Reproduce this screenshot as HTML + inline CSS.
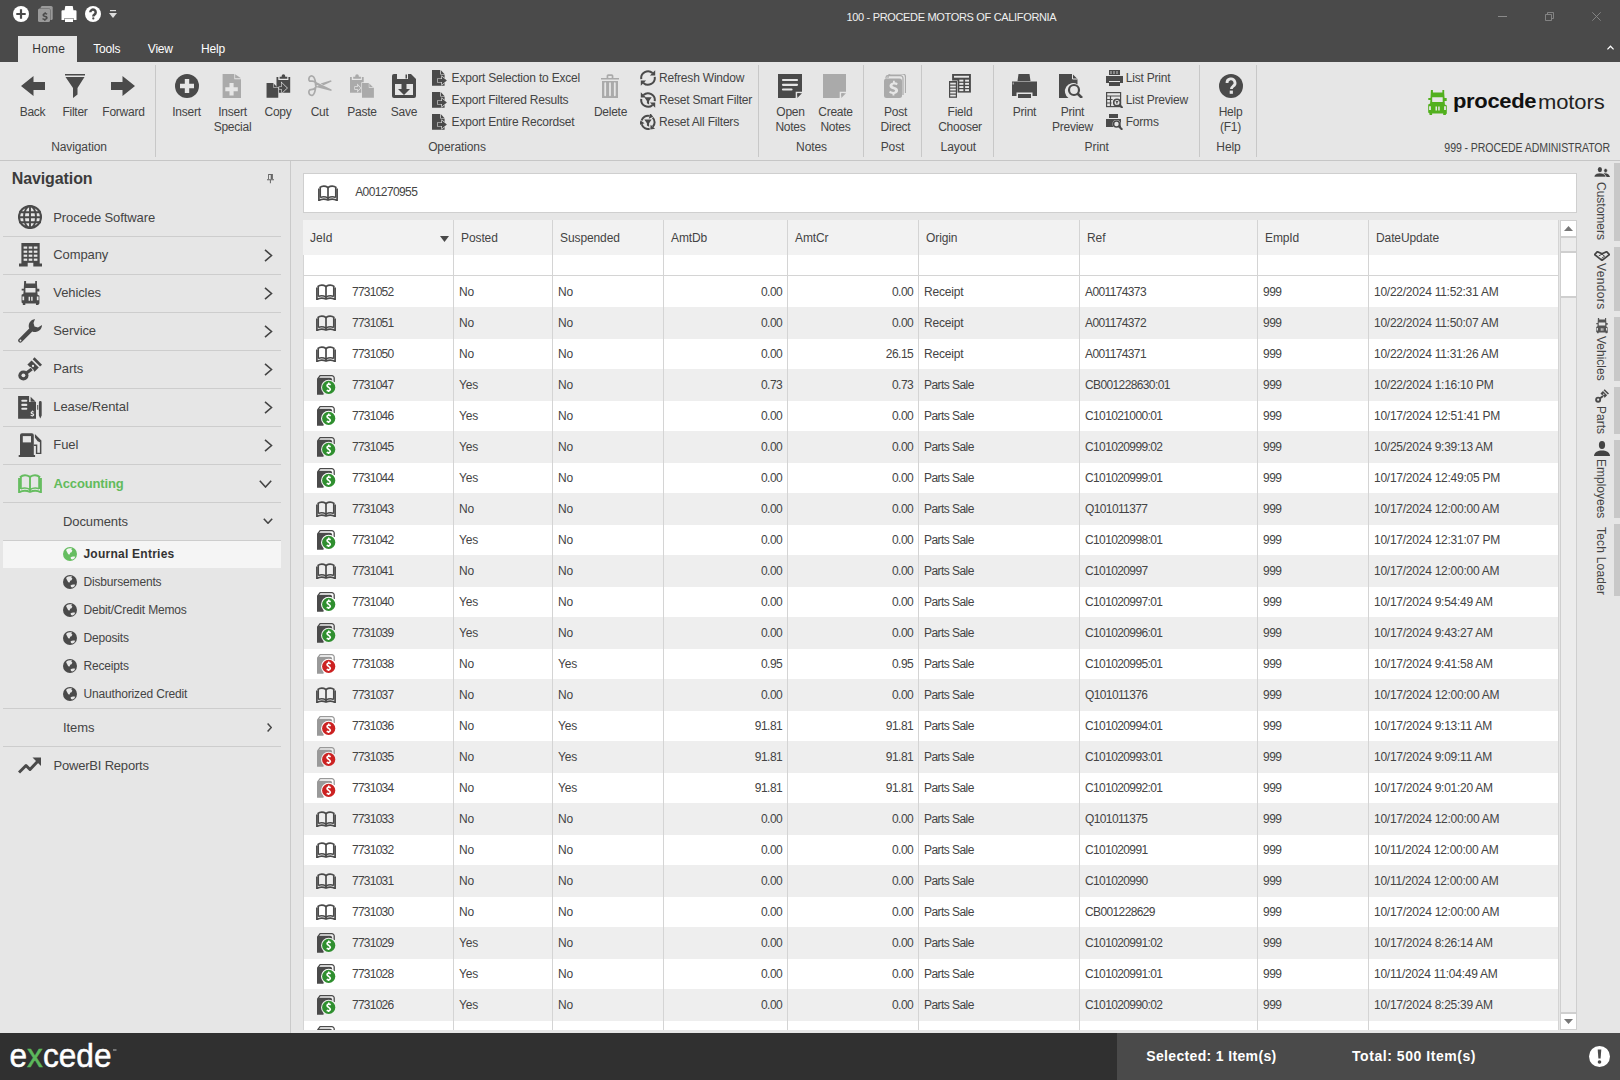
<!DOCTYPE html><html><head><meta charset="utf-8"><style>
html,body{margin:0;padding:0;}
body{width:1620px;height:1080px;overflow:hidden;position:relative;background:#e6e6e6;font-family:"Liberation Sans",sans-serif;}
.t{position:absolute;white-space:nowrap;}
.r{position:absolute;}
.i{position:absolute;overflow:visible;}
</style></head><body>
<svg width="0" height="0" style="position:absolute">
<defs>
<!-- quick access (white) -->
<symbol id="qa-plus" viewBox="0 0 16 16"><circle cx="8" cy="8" r="8" fill="#fff"/><path d="M6.9 3.3h2.2v3.6h3.6v2.2H9.1v3.6H6.9V9.1H3.3V6.9h3.6z" fill="#4a4a4a"/></symbol>
<symbol id="qa-dollar" viewBox="0 0 15 16"><rect x="2.7" y="0" width="12" height="14" rx="1.5" fill="#9a9a9a"/><rect x="0" y="2.6" width="12" height="13.4" rx="1.5" fill="#9a9a9a" stroke="#4a4a4a" stroke-width="0.8" paint-order="stroke"/><g transform="translate(1.2 3.2) scale(0.6)"><path d="M9 4.8v1.6c-2.2.3-3.5 1.6-3.5 3.4 0 2 1.5 2.8 3.6 3.4 1.5.4 2 .8 2 1.5s-.7 1.2-1.9 1.2c-1.2 0-2.3-.4-3.2-1.1l-.9 2c.9.7 2.2 1.1 3.4 1.2V19.6h1.9v-1.7c2.3-.3 3.7-1.7 3.7-3.5 0-2-1.3-2.9-3.6-3.5-1.6-.4-2-.8-2-1.4 0-.6.6-1.1 1.7-1.1 1 0 1.9.3 2.7.8l.8-2c-.8-.5-1.8-.8-2.9-.9V4.8z" fill="#4a4a4a"/></g></symbol>
<symbol id="qa-print" viewBox="0 0 16 16"><path d="M4.3 0h7.4l.8 4.6H3.5z M0.5 5.2a1 1 0 0 1 1-1h13a1 1 0 0 1 1 1V14h-3v-2h-9v2h-3z M4 12.6h8V16H4z" fill="#fff"/></symbol>
<symbol id="qa-help" viewBox="0 0 16 16"><circle cx="8" cy="8" r="8" fill="#fff"/><path d="M5.3 6.3a2.7 2.7 0 1 1 4.1 2.3c-.8.5-1.1.9-1.1 1.8" fill="none" stroke="#4a4a4a" stroke-width="2.5"/><rect x="7.2" y="11.3" width="2.2" height="2.2" rx="1" fill="#4a4a4a"/></symbol>
<symbol id="qa-drop" viewBox="0 0 8 9"><rect x="1" y="0" width="6" height="1.2" fill="#ddd"/><path d="M0 3h8L4 8z" fill="#ddd"/></symbol>
<symbol id="win-restore" viewBox="0 0 9 9"><path d="M0.5 2.5h6v6h-6z M2.5 2.5v-2h6v6h-2" fill="none" stroke="#8a8a8a" stroke-width="0.9"/></symbol>
<symbol id="win-close" viewBox="0 0 9 9"><path d="M0.3 0.3l8.4 8.4M8.7 0.3l-8.4 8.4" stroke="#8a8a8a" stroke-width="0.9"/></symbol>
<symbol id="caret-up" viewBox="0 0 7 5"><path d="M0.4 4.4L3.5 1.2 6.6 4.4" fill="none" stroke="#fff" stroke-width="1.3"/></symbol>
<!-- ribbon -->
<symbol id="back" viewBox="0 0 24 20"><path d="M0 10L12.5 0v6H24v8H12.5v6z" fill="#4a4a4a"/></symbol>
<symbol id="forward" viewBox="0 0 24 20"><path d="M24 10L11.5 0v6H0v8h11.5v6z" fill="#4a4a4a"/></symbol>
<symbol id="filter" viewBox="0 0 20 24"><rect x="0" y="0" width="20" height="1.5" fill="#4a4a4a"/><path d="M0.5 3h19l-7 11v6.5L8 24V14z" fill="#4a4a4a"/></symbol>
<symbol id="insert" viewBox="0 0 24 24"><circle cx="12" cy="12" r="12" fill="#4a4a4a"/><path d="M9.8 5h4.4v4.8H19v4.4h-4.8V19H9.8v-4.8H5V9.8h4.8z" fill="#e6e6e6"/></symbol>
<symbol id="insert-special" viewBox="0 0 20 24"><path d="M0.6 0H12.3V5.2H19V24H0.6z" fill="#aaaaaa"/><path d="M13.1 0.2V4.3H19z" fill="#aaaaaa"/><path d="M7.5 9h4.1v4.2h4.2v4.1h-4.2v4.2H7.5v-4.2H3.3v-4.1h4.2z" fill="#e6e6e6"/></symbol>
<symbol id="copy" viewBox="0 0 25 24"><path d="M10.5 3h1.8v3h10.1V3h1.8v15.8H10.5z" fill="#4a4a4a"/><path d="M13.6 2.8h2.05V2a1.78 1.78 0 0 1 3.56 0v0.8h2.1v1.9h-7.7z" fill="#4a4a4a"/><path d="M0.55 9h6.85v4.8h4.85v9.9H0.55z" fill="#4a4a4a" stroke="#e6e6e6" stroke-width="1.3" paint-order="stroke"/><path d="M7.9 9.8v3.4h3.4z" fill="#4a4a4a"/><path d="M13.2 13h2.4V8.8l5.4 5.2-5.4 5.2v-4.2h-2.4z" fill="#4a4a4a" stroke="#e6e6e6" stroke-width="1.2" paint-order="stroke"/></symbol>
<symbol id="cut" viewBox="0 0 24 22"><g fill="none" stroke="#aaaaaa" stroke-width="1.7" stroke-linejoin="round"><path d="M7.6 7.6C6.5 6.2 5 5.8 3 6.2 1.3 6.4 0.6 5 1 3.2 1.4 1.2 3.2 0.6 4.6 1.2 6.3 1.9 7 4.2 7.6 7.6z"/><path d="M7.6 12.6C6.5 14 5 14.6 3 14.6 1.3 14.6 0.6 16 1 18 1.4 20 3.2 20.8 4.6 20.2 6.3 19.5 7 17.2 7.6 12.6z"/></g><path d="M7 6.6L23.6 14.6 23.4 16 9.8 12.6 7.8 12.4 7 11.6 6.6 8.4z" fill="#aaaaaa"/><path d="M8.6 9.9a1 1 0 1 0 2 0.6" fill="#e6e6e6"/><path d="M12.6 8.4L23 5.2 23.6 6.4 15.6 10.3z" fill="#aaaaaa"/></symbol>
<symbol id="paste" viewBox="0 0 25 24"><path d="M1 3h1.8v3h10.1V3h1.8v15.8H1z" fill="#aaaaaa"/><path d="M4.2 2.8h2.05V2a1.78 1.78 0 0 1 3.56 0v0.8h2.1v1.9H4.2z" fill="#aaaaaa"/><path d="M13 9h6.8v4.8h5.1v9.9H13z" fill="#aaaaaa" stroke="#e6e6e6" stroke-width="1.3" paint-order="stroke"/><path d="M20.3 9.6v3.5h3.5z" fill="#aaaaaa"/><path d="M6 13h2.8V11.2l2.6 2.8-2.6 2.8v-1.8H6z" fill="#aaaaaa" stroke="#e6e6e6" stroke-width="1.3" paint-order="stroke"/></symbol>
<symbol id="save" viewBox="0 0 24 24"><path d="M0 2a2 2 0 0 1 2-2h17l5 5v17a2 2 0 0 1-2 2H2a2 2 0 0 1-2-2z" fill="#4a4a4a"/><path d="M5 0h11v5H5z" fill="#e6e6e6"/><path d="M13.5 0.5h1.5v4h-1.5z" fill="#4a4a4a"/><path d="M3 10h18v11H3z" fill="#e6e6e6"/><path d="M9.5 10h5v5h3.5l-6 6-6-6h3.5z" fill="#4a4a4a"/></symbol>
<symbol id="export" viewBox="0 0 16 16"><path d="M0 0h8.2v4.6h4.4V15.8H0z" fill="#4a4a4a"/><path d="M8.9 0.3v3.6h3.5z" fill="#4a4a4a"/><path d="M5.6 9.1h4.4V6.5l4.9 4-4.9 4v-2.6H5.6z" fill="#4a4a4a" stroke="#e6e6e6" stroke-width="1.2" paint-order="stroke"/></symbol>
<symbol id="delete" viewBox="0 0 18 24"><path d="M0 4h18v1.6H0z M1 7h16v17H1z" fill="#aaaaaa"/><path d="M5.6 4.2V1.8A1.6 1.6 0 0 1 7.2 0.2h3.6A1.6 1.6 0 0 1 12.4 1.8V4.2h-1.7V1.9H7.3V4.2z" fill="#aaaaaa"/><path d="M3.3 9.2a0.9 0.9 0 0 1 1.8 0V21.3a0.9 0.9 0 0 1-1.8 0z M8.1 9.2a0.9 0.9 0 0 1 1.8 0V21.3a0.9 0.9 0 0 1-1.8 0z M12.9 9.2a0.9 0.9 0 0 1 1.8 0V21.3a0.9 0.9 0 0 1-1.8 0z" fill="#e6e6e6"/></symbol>
<symbol id="refresh" viewBox="0 0 16 16"><path d="M1.3 9.2A6.8 6.8 0 0 1 12.6 3.1 M14.7 6.8A6.8 6.8 0 0 1 3.4 12.9" fill="none" stroke="#4a4a4a" stroke-width="2"/><path d="M15.2 0.3V5.6H9.9z M0.8 15.7V10.4H6.1z" fill="#4a4a4a"/></symbol>
<symbol id="reset-smart" viewBox="0 0 16 16"><g transform="translate(16 0) scale(-1 1)"><path d="M1.3 9.2A6.8 6.8 0 0 1 12.6 3.1 M14.7 6.8A6.8 6.8 0 0 1 3.4 12.9" fill="none" stroke="#4a4a4a" stroke-width="2"/><path d="M15.2 0.3V5.6H9.9z M0.8 15.7V10.4H6.1z" fill="#4a4a4a"/></g><path d="M4.3 5.3h7.4L9.1 9v3.4L6.9 11.2V9z" fill="#4a4a4a"/></symbol>
<symbol id="reset-all" viewBox="0 0 16 16"><path d="M1.62 6.59A6.6 6.6 0 0 1 9.48 1.87 M12.67 3.63A6.6 6.6 0 0 1 12.83 12.80 M9.71 14.68A6.6 6.6 0 0 1 1.69 10.23 " fill="none" stroke="#4a4a4a" stroke-width="2"/><path d="M13.19 2.72L10.16 -1.05L8.81 4.79z M10.24 15.58L15.02 14.85L10.63 10.76z M0.58 6.60L-1.18 11.11L4.56 9.35z " fill="#4a4a4a"/><path d="M4.3 5.6h7.4L9.1 9.3v3.4L6.9 11.5V9.3z" fill="#4a4a4a"/></symbol>
<symbol id="open-notes" viewBox="0 0 24 24"><path d="M0 0h24v17.5L17.5 24H0z" fill="#4a4a4a"/><path d="M5 6h14 M5 10.8h14 M5 15.5h8.5" stroke="#e6e6e6" stroke-width="2.2" stroke-linecap="round"/><path d="M24 18.5h-5.5V24" fill="none" stroke="#e6e6e6" stroke-width="1.6"/><path d="M19.3 19.3H24L19.3 24z" fill="#4a4a4a"/></symbol>
<symbol id="create-notes" viewBox="0 0 24 24"><path d="M0 0h23v17.5L16.5 24H0z" fill="#aaaaaa"/><path d="M23 18.5h-5.5V24" fill="none" stroke="#e6e6e6" stroke-width="1.6"/><path d="M18.3 19.3H23L18.3 24z" fill="#aaaaaa"/></symbol>
<symbol id="post-direct" viewBox="0 0 22 24"><path d="M4 4V2.8A2.8 2.8 0 0 1 6.8 0h11.7a3 3 0 0 1 3 3v16" fill="none" stroke="#aaaaaa" stroke-width="1.2"/><path d="M2 4.5V3.2A1.8 1.8 0 0 1 3.8 1.6h12.6a2.6 2.6 0 0 1 2.6 2.6V21" fill="none" stroke="#aaaaaa" stroke-width="1.2"/><rect x="0" y="4.5" width="18" height="19.5" rx="2.5" fill="#aaaaaa"/><g transform="translate(0 2)"><path d="M9 4.8v1.6c-2.2.3-3.5 1.6-3.5 3.4 0 2 1.5 2.8 3.6 3.4 1.5.4 2 .8 2 1.5s-.7 1.2-1.9 1.2c-1.2 0-2.3-.4-3.2-1.1l-.9 2c.9.7 2.2 1.1 3.4 1.2V19.6h1.9v-1.7c2.3-.3 3.7-1.7 3.7-3.5 0-2-1.3-2.9-3.6-3.5-1.6-.4-2-.8-2-1.4 0-.6.6-1.1 1.7-1.1 1 0 1.9.3 2.7.8l.8-2c-.8-.5-1.8-.8-2.9-.9V4.8z" fill="#e6e6e6"/></g></symbol>
<symbol id="field-chooser" viewBox="0 0 23 24"><path d="M3.1 0h18.8v18.6H3.1z" fill="#4a4a4a"/><path d="M5 1.8h15v1.9H5z" fill="#e6e6e6"/><rect x="10.3" y="5.7" width="4.1" height="1.9" fill="#e6e6e6"/><rect x="16.1" y="5.7" width="3.9" height="1.9" fill="#e6e6e6"/><rect x="10.3" y="8.9" width="4.1" height="1.9" fill="#e6e6e6"/><rect x="16.1" y="8.9" width="3.9" height="1.9" fill="#e6e6e6"/><rect x="10.3" y="12.1" width="4.1" height="1.9" fill="#e6e6e6"/><rect x="16.1" y="12.1" width="3.9" height="1.9" fill="#e6e6e6"/><rect x="10.3" y="15.2" width="4.1" height="1.9" fill="#e6e6e6"/><rect x="16.1" y="15.2" width="3.9" height="1.9" fill="#e6e6e6"/><path d="M0 7h8v16.8H0z" fill="#4a4a4a" stroke="#e6e6e6" stroke-width="1.2" paint-order="stroke"/><rect x="1.2" y="8.7" width="5.6" height="1.8" fill="#e6e6e6"/><rect x="1.2" y="11.7" width="5.6" height="1.8" fill="#e6e6e6"/><rect x="1.2" y="14.7" width="5.6" height="1.8" fill="#e6e6e6"/><rect x="1.2" y="17.7" width="5.6" height="1.8" fill="#e6e6e6"/><rect x="1.2" y="20.7" width="5.6" height="1.8" fill="#e6e6e6"/></symbol>
<symbol id="print" viewBox="0 0 25 24"><path d="M6.5 0h11l1 7h-13z M0 7.5h25v14.5h-4.5v-3.5h-16V22H0z M6 20h13v4H6z" fill="#4a4a4a"/><path d="M1.2 8.5v2" stroke="#e6e6e6" stroke-width="0.8"/></symbol>
<symbol id="print-preview" viewBox="0 0 25 24"><path d="M0 0h13.5l5 5v5.5a7 7 0 0 0-9 13.5H0z" fill="#4a4a4a"/><path d="M13.5 0v5h5" fill="none" stroke="#e6e6e6" stroke-width="1"/><circle cx="15" cy="16" r="5" fill="none" stroke="#4a4a4a" stroke-width="2.2"/><path d="M18.5 19.5l4.5 4.5" stroke="#4a4a4a" stroke-width="2.6"/></symbol>
<symbol id="list-print" viewBox="0 0 17 16"><path d="M3 0h11v5H3z M0 6h17v7h-3v-2H3v2H0z M3 12h11v4H3z" fill="#4a4a4a"/><path d="M5 1v3 M8 1v3 M11 1v3" stroke="#e6e6e6" stroke-width="0.8"/></symbol>
<symbol id="list-preview" viewBox="0 0 17 16"><g fill="none" stroke="#4a4a4a" stroke-width="1.2"><rect x="0.6" y="0.6" width="14" height="14"/><path d="M0.6 4h14 M0.6 7.5h6 M0.6 11h5 M4.5 4v10"/><circle cx="11" cy="10.5" r="3.3" stroke-width="1.6"/><path d="M13.5 13l3 3" stroke-width="2"/></g><path d="M9.5 9h3l-1.2 2v1.5L10.5 12v-1z" fill="#4a4a4a"/></symbol>
<symbol id="forms" viewBox="0 0 17 16"><path d="M3 0h9v4H3z M0 5h15v8H0z" fill="#4a4a4a"/><circle cx="10.5" cy="10" r="4" fill="#e6e6e6"/><circle cx="10.5" cy="10" r="3" fill="none" stroke="#4a4a4a" stroke-width="1.6"/><path d="M12.8 12.3l3.5 3.5" stroke="#4a4a4a" stroke-width="2"/></symbol>
<symbol id="help" viewBox="0 0 24 24"><circle cx="12" cy="12" r="12" fill="#4a4a4a"/><path d="M8 9a4 4 0 1 1 6 3.3c-1.2.8-1.6 1.3-1.6 2.7" fill="none" stroke="#e6e6e6" stroke-width="2.8"/><rect x="10.7" y="16.6" width="3.2" height="3.2" fill="#e6e6e6"/></symbol>
<symbol id="logo-truck" viewBox="0 0 19 25"><path d="M2.9 0h2v2.6h9.5V0h1.8v3l0.4 5h2.1v3h-2.1l0.3 3.4 1.9 1v8l-1 1V25h-2.6v-1.6H4.1V25H1.5v-1.6l-1.3-1v-8l1.9-1 0.3-3.4H0.3V8h2.2z" fill="#52b01e"/><path d="M4.2 7.3h10.5V12H4.2z M1.1 16.2h1.8v3.8H1.1z M16.1 16.2h1.8v3.8h-1.8z M7.5 16.5H9v4H7.5z M10.2 16.5h1.5v4h-1.5z" fill="#e6e6e6"/></symbol>
<!-- nav -->
<symbol id="pin" viewBox="0 0 8 10"><path d="M2.1 0h4.8v5.3H2.1z M3 1v4.2h1.7V1z" fill="#666" fill-rule="evenodd"/><path d="M1 5.2h7v1.1H1z M3.9 6.2h1v3H3.9z" fill="#666"/></symbol>
<symbol id="globe" viewBox="0 0 24 24"><circle cx="12" cy="12" r="12" fill="#4a4a4a"/><circle cx="12" cy="12" r="10" fill="#e6e6e6"/><g stroke="#4a4a4a" stroke-width="1.9" fill="none"><path d="M1 7.2h22 M0 12.2h24 M1 17.2h22 M12 1v22"/><ellipse cx="12" cy="12" rx="6" ry="11"/></g></symbol>
<symbol id="company" viewBox="0 0 23 24"><path d="M2.4 0h18.3v20.5H23V23.5H0V20.5h2.4z" fill="#4a4a4a"/><g fill="#e6e6e6"><rect x="4.6" y="3.5" width="3.6" height="2.2"/><rect x="9.7" y="3.5" width="3.6" height="2.2"/><rect x="14.8" y="3.5" width="3.6" height="2.2"/><rect x="4.6" y="7.6" width="3.6" height="2.2"/><rect x="9.7" y="7.6" width="3.6" height="2.2"/><rect x="14.8" y="7.6" width="3.6" height="2.2"/><rect x="4.6" y="11.6" width="3.6" height="2.2"/><rect x="9.7" y="11.6" width="3.6" height="2.2"/><rect x="14.8" y="11.6" width="3.6" height="2.2"/><rect x="4.6" y="15.6" width="3.6" height="2.2"/><rect x="9.7" y="15.6" width="3.6" height="2.2"/><rect x="14.8" y="15.6" width="3.6" height="2.2"/><rect x="8.7" y="19.8" width="5.6" height="4.2"/></g></symbol>
<symbol id="vehicles" viewBox="0 0 19 25"><path d="M2.9 0h2v2.6h9.5V0h1.8v3l0.4 5h2.1v3h-2.1l0.3 3.4 1.9 1v8l-1 1V25h-2.6v-1.6H4.1V25H1.5v-1.6l-1.3-1v-8l1.9-1 0.3-3.4H0.3V8h2.2z" fill="#4a4a4a"/><path d="M4.2 7.3h10.5V12H4.2z M1.1 16.2h1.8v3.8H1.1z M16.1 16.2h1.8v3.8h-1.8z M7.5 16.5H9v4H7.5z M10.2 16.5h1.5v4h-1.5z" fill="#e6e6e6"/></symbol>
<symbol id="service" viewBox="0 0 24 24"><path d="M17 0a7 7 0 0 0-5.8 9.5L0.8 20a2 2 0 0 0 3 3L14.3 12.5A7 7 0 0 0 24 6l-4 2.5-3.5-1-1-3.5z" fill="#4a4a4a"/><circle cx="2.5" cy="21.5" r="0.9" fill="#e6e6e6"/></symbol>
<symbol id="parts" viewBox="0 0 24 24"><path d="M16.6 0.3L24 7.7 22.1 9.6 14.7 2.2z" fill="#4a4a4a"/><path d="M13.6 3.4L20.8 10.6 16.6 14.8 9.4 7.6z" fill="#4a4a4a"/><circle cx="15" cy="9" r="1.15" fill="#e6e6e6"/><path d="M14.2 11.6L12.2 13.6" stroke="#e6e6e6" stroke-width="5"/><path d="M13.8 12L6.5 17.5" stroke="#4a4a4a" stroke-width="3.2"/><circle cx="5.4" cy="18.5" r="5.1" fill="#4a4a4a"/><circle cx="5.4" cy="18.3" r="1.9" fill="#e6e6e6"/></symbol>
<symbol id="lease" viewBox="0 0 24 24"><path d="M0.1 1.1H11.1V7.1H18V23.8H0.1z" fill="#4a4a4a"/><path d="M12.6 1.7V6.7H17.7z" fill="#4a4a4a"/><path d="M4.3 5.8h4 M4.3 9.9h4 M4.3 13.7h4" stroke="#e6e6e6" stroke-width="2.1" stroke-linecap="round"/><g transform="translate(10.3 13.6) scale(0.42)"><path d="M9 4.8v1.6c-2.2.3-3.5 1.6-3.5 3.4 0 2 1.5 2.8 3.6 3.4 1.5.4 2 .8 2 1.5s-.7 1.2-1.9 1.2c-1.2 0-2.3-.4-3.2-1.1l-.9 2c.9.7 2.2 1.1 3.4 1.2V19.6h1.9v-1.7c2.3-.3 3.7-1.7 3.7-3.5 0-2-1.3-2.9-3.6-3.5-1.6-.4-2-.8-2-1.4 0-.6.6-1.1 1.7-1.1 1 0 1.9.3 2.7.8l.8-2c-.8-.5-1.8-.8-2.9-.9V4.8z" fill="#e6e6e6"/></g><path d="M20.9 7.4a1.4 1.4 0 0 1 2.8 0V20.4L22.3 23.5 20.9 20.4z" fill="#4a4a4a"/><path d="M19.2 9.9h1v4.8h-1z" fill="#4a4a4a"/></symbol>
<symbol id="fuel" viewBox="0 0 24 24"><path d="M2 2.3a2 2 0 0 1 2-2h9.8a2 2 0 0 1 2 2V22h1.3v1.9H0.7V22H2z" fill="#4a4a4a"/><path d="M4.8 3.1h8.2v6.3H4.8z" fill="#e6e6e6"/><path d="M16.9 0.9L23.4 7.4V21.1H17.9V12.9H15.8V11.4H19.3V19.8H21.9V9.2L19.6 8.2 16.9 4.6z" fill="#4a4a4a"/></symbol>
<symbol id="accounting" viewBox="0 0 20 16" preserveAspectRatio="none"><g fill="none" stroke="#66bd60" stroke-width="1.6"><path d="M1.6 2.7C4 0.8 7.3 0.8 10 2.4 12.7 0.8 16 0.8 18.4 2.7"/><path d="M2.4 2.3V12.6 M17.6 2.3V12.6" stroke-width="1.5"/><path d="M10 2.4V14.6"/><path d="M2.4 12.5C5 11.4 7.5 11.6 10 13.1 12.5 11.6 15 11.4 17.6 12.5" stroke-width="1.4"/><path d="M0.9 3.4V15.5C3.8 13.7 7 13.7 10 15.1 13 13.7 16.2 13.7 19.1 15.5V3.4"/></g></symbol>
<symbol id="chev-right" viewBox="0 0 9 13"><path d="M1 0.8L7.5 6.5 1 12.2" fill="none" stroke="#444" stroke-width="1.6"/></symbol>
<symbol id="chev-down" viewBox="0 0 13 8"><path d="M0.8 0.8L6.5 7 12.2 0.8" fill="none" stroke="#444" stroke-width="1.6"/></symbol>
<symbol id="chev-down-s" viewBox="0 0 10 6"><path d="M0.8 0.8L5 5.2 9.2 0.8" fill="none" stroke="#444" stroke-width="1.6"/></symbol>
<symbol id="chev-right-s" viewBox="0 0 5 9"><path d="M0.6 0.6L4.3 4.5 0.6 8.4" fill="none" stroke="#444" stroke-width="1.5"/></symbol>
<symbol id="globe-green" viewBox="0 0 14 14"><circle cx="7" cy="7" r="7" fill="#66bd60"/><path d="M3.6 2.2C5 1.2 7.5 0.9 9 1.6L8.3 2.8 9.4 3.6 8.5 5.3 7.2 5.8 6.6 7.6 5.2 7.3 4.3 5.6 3.2 3.6z M7.6 10.2C9 9.3 10.8 9.2 12.2 9.8L11.3 11.6 9.4 12.6 8 12z" fill="#f5f5f5"/></symbol>
<symbol id="globe-dark" viewBox="0 0 14 14"><circle cx="7" cy="7" r="7" fill="#4a4a4a"/><path d="M3.6 2.2C5 1.2 7.5 0.9 9 1.6L8.3 2.8 9.4 3.6 8.5 5.3 7.2 5.8 6.6 7.6 5.2 7.3 4.3 5.6 3.2 3.6z M7.6 10.2C9 9.3 10.8 9.2 12.2 9.8L11.3 11.6 9.4 12.6 8 12z" fill="#e6e6e6"/></symbol>
<symbol id="powerbi" viewBox="0 0 23 17"><path d="M1 15.5L8 8.5l4 4 8.5-9" fill="none" stroke="#4a4a4a" stroke-width="3" stroke-linejoin="round"/><path d="M14.5 0.5H23v8.5z" fill="#4a4a4a"/></symbol>
<!-- grid -->
<symbol id="book" viewBox="0 0 20 16"><g fill="none" stroke="#4a4a4a" stroke-width="1.7"><path d="M1.6 2.7C4 0.8 7.3 0.8 10 2.4 12.7 0.8 16 0.8 18.4 2.7"/><path d="M2.3 2.3V12.6 M17.7 2.3V12.6" stroke-width="1.5"/><path d="M10 2.4V14.6"/><path d="M2.3 12.5C5 11.4 7.5 11.6 10 13.1 12.5 11.6 15 11.4 17.7 12.5" stroke-width="1.4"/><path d="M0.9 3.4V15.5C3.8 13.7 7 13.7 10 15.1 13 13.7 16.2 13.7 19.1 15.5V3.4"/></g></symbol>
<symbol id="doc-green" viewBox="0 0 19 20"><path d="M0.65 3.8L3.1 0.65H14.8A2.4 2.4 0 0 1 17.2 3.05V7" fill="none" stroke="#4a4a4a" stroke-width="1.3"/><path d="M0 4L1.2 2.7H12.8Q14.4 2.7 15 4L15.3 6.5H8L6.5 19.8H0z" fill="#4a4a4a"/><circle cx="11.7" cy="12.4" r="7.7" fill="var(--rowbg,#fff)"/><circle cx="11.7" cy="12.4" r="6.6" fill="#2f8f2f"/><path d="M13.7 9.7Q11.8 8.5 10.5 9.6T11.7 12.4 12.9 15.2 9.7 15.2" fill="none" stroke="#fff" stroke-width="1.6"/><path d="M11.7 7.6v1.6 M11.7 15.3v1.6" stroke="#fff" stroke-width="1.4"/></symbol>
<symbol id="doc-red" viewBox="0 0 19 20"><path d="M0.65 3.8L3.1 0.65H14.8A2.4 2.4 0 0 1 17.2 3.05V7" fill="none" stroke="#999" stroke-width="1.3"/><path d="M0 4L1.2 2.7H12.8Q14.4 2.7 15 4L15.3 6.5H8L6.5 19.8H0z" fill="#999"/><circle cx="11.7" cy="12.4" r="7.7" fill="var(--rowbg,#fff)"/><circle cx="11.7" cy="12.4" r="6.6" fill="#cc2222"/><path d="M13.7 9.7Q11.8 8.5 10.5 9.6T11.7 12.4 12.9 15.2 9.7 15.2" fill="none" stroke="#fff" stroke-width="1.6"/><path d="M11.7 7.6v1.6 M11.7 15.3v1.6" stroke="#fff" stroke-width="1.4"/></symbol>
<symbol id="sort-down" viewBox="0 0 9 6"><path d="M0 0h9L4.5 6z" fill="#4a4a4a"/></symbol>
<symbol id="sb-up" viewBox="0 0 9 5"><path d="M0 5h9L4.5 0z" fill="#777"/></symbol>
<symbol id="sb-down" viewBox="0 0 9 5"><path d="M0 0h9L4.5 5z" fill="#777"/></symbol>
<!-- side tabs -->
<symbol id="s-customers" viewBox="0 0 16 10"><path d="M9.4 6.6C10.2 6.3 11 6.2 11.8 6.2 14 6.4 15.5 8 16 10H12.6z" fill="#444"/><ellipse cx="11.6" cy="3.6" rx="1.8" ry="2.2" fill="#444" stroke="#e6e6e6" stroke-width="0.6"/><ellipse cx="5.9" cy="2.6" rx="2.1" ry="2.6" fill="#444"/><path d="M0 10C0.4 7.2 2.8 6 5.9 6S11.4 7.2 12 10z" fill="#444" stroke="#e6e6e6" stroke-width="0.6"/></symbol>
<symbol id="s-vendors" viewBox="0 0 16 10"><path d="M0.6 3.6L3.4 0.7 8 2.8 12.6 0.7 15.4 3.6 8 9.4z" fill="none" stroke="#444" stroke-width="1.7" stroke-linejoin="round"/><path d="M4.8 4.8L8 3.2 10.6 5.2 7.6 7.4" fill="none" stroke="#444" stroke-width="1"/></symbol>
<symbol id="s-vehicles" viewBox="0 0 19 25"><path d="M2.9 0h2v2.6h9.5V0h1.8v3l0.4 5h2.1v3h-2.1l0.3 3.4 1.9 1v8l-1 1V25h-2.6v-1.6H4.1V25H1.5v-1.6l-1.3-1v-8l1.9-1 0.3-3.4H0.3V8h2.2z" fill="#555"/><path d="M4.2 7.3h10.5V12H4.2z M1.1 16.2h1.8v3.8H1.1z M16.1 16.2h1.8v3.8h-1.8z M7.5 16.5H9v4H7.5z M10.2 16.5h1.5v4h-1.5z" fill="#e6e6e6"/></symbol>
<symbol id="s-parts" viewBox="0 0 24 24"><use href="#parts"/></symbol>
<symbol id="s-employees" viewBox="0 0 16 15"><ellipse cx="8" cy="4" rx="3.1" ry="4" fill="#444"/><path d="M0 15C0.4 11.2 3.8 9.6 8 9.6S15.6 11.2 16 15z" fill="#444"/></symbol>
<!-- footer -->
<symbol id="excede" viewBox="0 0 112 30"><g transform="translate(1.5 0) scale(0.93 1)"><text x="0" y="27.4" font-family="Liberation Sans" font-size="34" fill="#fff" stroke="#fff" stroke-width="0.5" letter-spacing="0">e<tspan fill="#5cb85c" stroke="#5cb85c">x</tspan>cede</text></g><rect x="105" y="9.5" width="3.5" height="1" fill="#bbb"/></symbol>
<symbol id="alert" viewBox="0 0 21 21"><circle cx="10.5" cy="10.5" r="10.5" fill="#fff"/><path d="M8.7 3.5h3.6l-0.7 9h-2.2z" fill="#4a4a4a"/><circle cx="10.5" cy="16" r="1.8" fill="#4a4a4a"/></symbol>
</defs>
</svg>

<div class="r" style="left:0px;top:0px;width:1620px;height:62px;background:#4a4a4a;"></div>
<svg class="i" style="left:13px;top:6px;" width="16" height="16"><use href="#qa-plus"/></svg>
<svg class="i" style="left:38px;top:6px;" width="15" height="16"><use href="#qa-dollar"/></svg>
<svg class="i" style="left:61px;top:6px;" width="16" height="16"><use href="#qa-print"/></svg>
<svg class="i" style="left:85px;top:6px;" width="16" height="16"><use href="#qa-help"/></svg>
<svg class="i" style="left:109px;top:10px;" width="8" height="9"><use href="#qa-drop"/></svg>
<div class="t" style="left:846.5px;top:12.19px;font-size:11px;line-height:11px;color:#f0f0f0;letter-spacing:-0.33px;">100 - PROCEDE MOTORS OF CALIFORNIA</div>
<div class="r" style="left:1498px;top:16px;width:9px;height:1px;background:#8a8a8a;"></div>
<svg class="i" style="left:1545px;top:12px;" width="9" height="9"><use href="#win-restore"/></svg>
<svg class="i" style="left:1592px;top:12px;" width="9" height="9"><use href="#win-close"/></svg>
<svg class="i" style="left:1607px;top:45px;" width="7" height="5"><use href="#caret-up"/></svg>
<div class="r" style="left:18px;top:36px;width:59px;height:26px;background:#e6e6e6;"></div>
<div class="t" style="left:32.3px;top:42.64px;font-size:12px;line-height:12px;color:#333;letter-spacing:0.2px;">Home</div>
<div class="t" style="left:93.2px;top:42.64px;font-size:12px;line-height:12px;color:#fff;letter-spacing:-0.2px;">Tools</div>
<div class="t" style="left:147.8px;top:42.64px;font-size:12px;line-height:12px;color:#fff;letter-spacing:-0.2px;">View</div>
<div class="t" style="left:201.1px;top:42.64px;font-size:12px;line-height:12px;color:#fff;letter-spacing:-0.2px;">Help</div>
<div class="r" style="left:0px;top:160px;width:1620px;height:1px;background:#c6c6c6;"></div>
<div class="r" style="left:155px;top:65px;width:1px;height:92px;background:#c8c8c8;"></div>
<div class="r" style="left:758px;top:65px;width:1px;height:92px;background:#c8c8c8;"></div>
<div class="r" style="left:863px;top:65px;width:1px;height:92px;background:#c8c8c8;"></div>
<div class="r" style="left:921px;top:65px;width:1px;height:92px;background:#c8c8c8;"></div>
<div class="r" style="left:993px;top:65px;width:1px;height:92px;background:#c8c8c8;"></div>
<div class="r" style="left:1199px;top:65px;width:1px;height:92px;background:#c8c8c8;"></div>
<div class="r" style="left:1256px;top:65px;width:1px;height:92px;background:#c8c8c8;"></div>
<div class="t" style="left:-7.5px;width:80px;text-align:center;top:105.84px;font-size:12px;line-height:12px;color:#444;letter-spacing:-0.25px;">Back</div>
<div class="t" style="left:35.0px;width:80px;text-align:center;top:105.84px;font-size:12px;line-height:12px;color:#444;letter-spacing:-0.25px;">Filter</div>
<div class="t" style="left:83.5px;width:80px;text-align:center;top:105.84px;font-size:12px;line-height:12px;color:#444;letter-spacing:-0.25px;">Forward</div>
<div class="t" style="left:29.0px;width:100px;text-align:center;top:141.14px;font-size:12px;line-height:12px;color:#444;letter-spacing:-0.1px;">Navigation</div>
<svg class="i" style="left:21px;top:76px;" width="24" height="20"><use href="#back"/></svg>
<svg class="i" style="left:65px;top:74px;" width="20" height="24"><use href="#filter"/></svg>
<svg class="i" style="left:111px;top:76px;" width="24" height="20"><use href="#forward"/></svg>
<div class="t" style="left:146.5px;width:80px;text-align:center;top:105.84px;font-size:12px;line-height:12px;color:#444;letter-spacing:-0.25px;">Insert</div>
<div class="t" style="left:192.5px;width:80px;text-align:center;top:105.84px;font-size:12px;line-height:12px;color:#444;letter-spacing:-0.25px;">Insert</div>
<div class="t" style="left:192.5px;width:80px;text-align:center;top:120.84px;font-size:12px;line-height:12px;color:#444;letter-spacing:-0.25px;">Special</div>
<div class="t" style="left:238.0px;width:80px;text-align:center;top:105.84px;font-size:12px;line-height:12px;color:#444;letter-spacing:-0.25px;">Copy</div>
<div class="t" style="left:279.6px;width:80px;text-align:center;top:105.84px;font-size:12px;line-height:12px;color:#444;letter-spacing:-0.25px;">Cut</div>
<div class="t" style="left:322.0px;width:80px;text-align:center;top:105.84px;font-size:12px;line-height:12px;color:#444;letter-spacing:-0.25px;">Paste</div>
<div class="t" style="left:364.0px;width:80px;text-align:center;top:105.84px;font-size:12px;line-height:12px;color:#444;letter-spacing:-0.25px;">Save</div>
<svg class="i" style="left:175px;top:74px;" width="24" height="24"><use href="#insert"/></svg>
<svg class="i" style="left:222px;top:74px;" width="20" height="24"><use href="#insert-special"/></svg>
<svg class="i" style="left:266px;top:74px;" width="25" height="24"><use href="#copy"/></svg>
<svg class="i" style="left:308px;top:75px;" width="24" height="22"><use href="#cut"/></svg>
<svg class="i" style="left:349px;top:74px;" width="25" height="24"><use href="#paste"/></svg>
<svg class="i" style="left:392px;top:74px;" width="24" height="24"><use href="#save"/></svg>
<svg class="i" style="left:432px;top:70px;" width="16" height="16"><use href="#export"/></svg>
<div class="t" style="left:451.6px;top:71.84px;font-size:12px;line-height:12px;color:#444;letter-spacing:-0.2px;">Export Selection to Excel</div>
<svg class="i" style="left:432px;top:92px;" width="16" height="16"><use href="#export"/></svg>
<div class="t" style="left:451.6px;top:93.84px;font-size:12px;line-height:12px;color:#444;letter-spacing:-0.2px;">Export Filtered Results</div>
<svg class="i" style="left:432px;top:114px;" width="16" height="16"><use href="#export"/></svg>
<div class="t" style="left:451.6px;top:115.84px;font-size:12px;line-height:12px;color:#444;letter-spacing:-0.2px;">Export Entire Recordset</div>
<svg class="i" style="left:601px;top:74px;" width="18" height="24"><use href="#delete"/></svg>
<div class="t" style="left:570.5px;width:80px;text-align:center;top:105.84px;font-size:12px;line-height:12px;color:#444;letter-spacing:-0.25px;">Delete</div>
<svg class="i" style="left:640px;top:70px;" width="16" height="16"><use href="#refresh"/></svg>
<div class="t" style="left:659px;top:71.84px;font-size:12px;line-height:12px;color:#444;letter-spacing:-0.2px;">Refresh Window</div>
<svg class="i" style="left:640px;top:92px;" width="16" height="16"><use href="#reset-smart"/></svg>
<div class="t" style="left:659px;top:93.84px;font-size:12px;line-height:12px;color:#444;letter-spacing:-0.2px;">Reset Smart Filter</div>
<svg class="i" style="left:640px;top:114px;" width="16" height="16"><use href="#reset-all"/></svg>
<div class="t" style="left:659px;top:115.84px;font-size:12px;line-height:12px;color:#444;letter-spacing:-0.2px;">Reset All Filters</div>
<div class="t" style="left:407.0px;width:100px;text-align:center;top:141.14px;font-size:12px;line-height:12px;color:#444;letter-spacing:-0.1px;">Operations</div>
<svg class="i" style="left:778px;top:74px;" width="24" height="24"><use href="#open-notes"/></svg>
<svg class="i" style="left:823px;top:74px;" width="24" height="24"><use href="#create-notes"/></svg>
<div class="t" style="left:750.5px;width:80px;text-align:center;top:105.84px;font-size:12px;line-height:12px;color:#444;letter-spacing:-0.25px;">Open</div>
<div class="t" style="left:750.5px;width:80px;text-align:center;top:120.84px;font-size:12px;line-height:12px;color:#444;letter-spacing:-0.25px;">Notes</div>
<div class="t" style="left:795.5px;width:80px;text-align:center;top:105.84px;font-size:12px;line-height:12px;color:#444;letter-spacing:-0.25px;">Create</div>
<div class="t" style="left:795.5px;width:80px;text-align:center;top:120.84px;font-size:12px;line-height:12px;color:#444;letter-spacing:-0.25px;">Notes</div>
<div class="t" style="left:781.5px;width:60px;text-align:center;top:141.14px;font-size:12px;line-height:12px;color:#444;letter-spacing:-0.1px;">Notes</div>
<svg class="i" style="left:884px;top:74px;" width="22" height="24"><use href="#post-direct"/></svg>
<div class="t" style="left:855.5px;width:80px;text-align:center;top:105.84px;font-size:12px;line-height:12px;color:#444;letter-spacing:-0.25px;">Post</div>
<div class="t" style="left:855.5px;width:80px;text-align:center;top:120.84px;font-size:12px;line-height:12px;color:#444;letter-spacing:-0.25px;">Direct</div>
<div class="t" style="left:862.5px;width:60px;text-align:center;top:141.14px;font-size:12px;line-height:12px;color:#444;letter-spacing:-0.1px;">Post</div>
<svg class="i" style="left:949px;top:74px;" width="23" height="24"><use href="#field-chooser"/></svg>
<div class="t" style="left:920.0px;width:80px;text-align:center;top:105.84px;font-size:12px;line-height:12px;color:#444;letter-spacing:-0.25px;">Field</div>
<div class="t" style="left:920.0px;width:80px;text-align:center;top:120.84px;font-size:12px;line-height:12px;color:#444;letter-spacing:-0.25px;">Chooser</div>
<div class="t" style="left:928.3px;width:60px;text-align:center;top:141.14px;font-size:12px;line-height:12px;color:#444;letter-spacing:-0.1px;">Layout</div>
<svg class="i" style="left:1012px;top:74px;" width="25" height="24"><use href="#print"/></svg>
<div class="t" style="left:984.5px;width:80px;text-align:center;top:105.84px;font-size:12px;line-height:12px;color:#444;letter-spacing:-0.25px;">Print</div>
<svg class="i" style="left:1059px;top:74px;" width="25" height="24"><use href="#print-preview"/></svg>
<div class="t" style="left:1032.5px;width:80px;text-align:center;top:105.84px;font-size:12px;line-height:12px;color:#444;letter-spacing:-0.25px;">Print</div>
<div class="t" style="left:1032.5px;width:80px;text-align:center;top:120.84px;font-size:12px;line-height:12px;color:#444;letter-spacing:-0.25px;">Preview</div>
<svg class="i" style="left:1106px;top:70px;" width="17" height="16"><use href="#list-print"/></svg>
<div class="t" style="left:1125.7px;top:71.84px;font-size:12px;line-height:12px;color:#444;letter-spacing:-0.2px;">List Print</div>
<svg class="i" style="left:1106px;top:92px;" width="17" height="16"><use href="#list-preview"/></svg>
<div class="t" style="left:1125.7px;top:93.84px;font-size:12px;line-height:12px;color:#444;letter-spacing:-0.2px;">List Preview</div>
<svg class="i" style="left:1106px;top:114px;" width="17" height="16"><use href="#forms"/></svg>
<div class="t" style="left:1125.7px;top:115.84px;font-size:12px;line-height:12px;color:#444;letter-spacing:-0.2px;">Forms</div>
<div class="t" style="left:1066.7px;width:60px;text-align:center;top:141.14px;font-size:12px;line-height:12px;color:#444;letter-spacing:-0.1px;">Print</div>
<svg class="i" style="left:1219px;top:74px;" width="24" height="24"><use href="#help"/></svg>
<div class="t" style="left:1190.5px;width:80px;text-align:center;top:105.84px;font-size:12px;line-height:12px;color:#444;letter-spacing:-0.25px;">Help</div>
<div class="t" style="left:1190.5px;width:80px;text-align:center;top:120.84px;font-size:12px;line-height:12px;color:#444;letter-spacing:-0.25px;">(F1)</div>
<div class="t" style="left:1198.5px;width:60px;text-align:center;top:141.14px;font-size:12px;line-height:12px;color:#444;letter-spacing:-0.1px;">Help</div>
<svg class="i" style="left:1428px;top:90px;" width="19" height="25"><use href="#logo-truck"/></svg>
<div class="t" style="left:1453.3px;top:91.47px;font-size:20px;line-height:20px;color:#111;font-weight:700;letter-spacing:-0.3px;transform:scaleX(1.1);transform-origin:0 0;">procede</div>
<div class="t" style="left:1537.8px;top:91.97px;font-size:20px;line-height:20px;color:#222;letter-spacing:-0.1px;transform:scaleX(1.1);transform-origin:0 0;">motors</div>
<div class="t" style="left:1409.6px;width:200px;text-align:right;top:142.04px;font-size:12px;line-height:12px;color:#444;letter-spacing:-0.1px;transform:scaleX(0.88);transform-origin:100% 0;">999 - PROCEDE ADMINISTRATOR</div>
<div class="r" style="left:290px;top:161px;width:1px;height:872px;background:#cacaca;"></div>
<div class="t" style="left:11.7px;top:170.86px;font-size:16px;line-height:16px;color:#3c3c3c;font-weight:700;letter-spacing:-0.1px;">Navigation</div>
<svg class="i" style="left:266px;top:174px;" width="8" height="10"><use href="#pin"/></svg>
<svg class="i" style="left:18px;top:205px;" width="24" height="24"><use href="#globe"/></svg>
<div class="t" style="left:53.3px;top:211.00px;font-size:13px;line-height:13px;color:#444;letter-spacing:-0.1px;">Procede Software</div>
<div class="r" style="left:3px;top:236px;width:278px;height:1px;background:#cdcdcd;"></div>
<svg class="i" style="left:19px;top:243px;" width="23" height="24"><use href="#company"/></svg>
<div class="t" style="left:53.3px;top:248.40px;font-size:13px;line-height:13px;color:#444;letter-spacing:-0.1px;">Company</div>
<svg class="i" style="left:264px;top:249px;" width="9" height="13"><use href="#chev-right"/></svg>
<div class="r" style="left:3px;top:274px;width:278px;height:1px;background:#cdcdcd;"></div>
<svg class="i" style="left:20.7px;top:281px;" width="19" height="24"><use href="#vehicles"/></svg>
<div class="t" style="left:53.3px;top:286.40px;font-size:13px;line-height:13px;color:#444;letter-spacing:-0.1px;">Vehicles</div>
<svg class="i" style="left:264px;top:287px;" width="9" height="13"><use href="#chev-right"/></svg>
<div class="r" style="left:3px;top:312px;width:278px;height:1px;background:#cdcdcd;"></div>
<svg class="i" style="left:18px;top:319px;" width="24" height="24"><use href="#service"/></svg>
<div class="t" style="left:53.3px;top:324.40px;font-size:13px;line-height:13px;color:#444;letter-spacing:-0.1px;">Service</div>
<svg class="i" style="left:264px;top:325px;" width="9" height="13"><use href="#chev-right"/></svg>
<div class="r" style="left:3px;top:350px;width:278px;height:1px;background:#cdcdcd;"></div>
<svg class="i" style="left:18px;top:357px;" width="24" height="24"><use href="#parts"/></svg>
<div class="t" style="left:53.3px;top:362.40px;font-size:13px;line-height:13px;color:#444;letter-spacing:-0.1px;">Parts</div>
<svg class="i" style="left:264px;top:363px;" width="9" height="13"><use href="#chev-right"/></svg>
<div class="r" style="left:3px;top:388px;width:278px;height:1px;background:#cdcdcd;"></div>
<svg class="i" style="left:18px;top:395px;" width="24" height="24"><use href="#lease"/></svg>
<div class="t" style="left:53.3px;top:400.40px;font-size:13px;line-height:13px;color:#444;letter-spacing:-0.1px;">Lease/Rental</div>
<svg class="i" style="left:264px;top:401px;" width="9" height="13"><use href="#chev-right"/></svg>
<div class="r" style="left:3px;top:426px;width:278px;height:1px;background:#cdcdcd;"></div>
<svg class="i" style="left:18px;top:433px;" width="24" height="24"><use href="#fuel"/></svg>
<div class="t" style="left:53.3px;top:438.40px;font-size:13px;line-height:13px;color:#444;letter-spacing:-0.1px;">Fuel</div>
<svg class="i" style="left:264px;top:439px;" width="9" height="13"><use href="#chev-right"/></svg>
<div class="r" style="left:3px;top:464px;width:278px;height:1px;background:#cdcdcd;"></div>
<svg class="i" style="left:18px;top:473.5px;" width="24" height="19"><use href="#accounting"/></svg>
<div class="t" style="left:53.5px;top:477.30px;font-size:13px;line-height:13px;color:#62bb5c;font-weight:700;letter-spacing:-0.15px;">Accounting</div>
<svg class="i" style="left:259px;top:480px;" width="13" height="8"><use href="#chev-down"/></svg>
<div class="r" style="left:3px;top:502px;width:278px;height:1px;background:#cdcdcd;"></div>
<div class="t" style="left:63px;top:515.00px;font-size:13px;line-height:13px;color:#444;letter-spacing:-0.1px;">Documents</div>
<svg class="i" style="left:263px;top:518px;" width="10" height="6"><use href="#chev-down-s"/></svg>
<div class="r" style="left:3px;top:540px;width:278px;height:1px;background:#cdcdcd;"></div>
<div class="r" style="left:3px;top:541px;width:278px;height:27px;background:#f5f5f5;"></div>
<svg class="i" style="left:63px;top:547px;" width="14" height="14"><use href="#globe-green"/></svg>
<div class="t" style="left:83.4px;top:548.04px;font-size:12px;line-height:12px;color:#333;font-weight:700;letter-spacing:0.25px;">Journal Entries</div>
<svg class="i" style="left:63px;top:575px;" width="14" height="14"><use href="#globe-dark"/></svg>
<div class="t" style="left:83.4px;top:575.84px;font-size:12px;line-height:12px;color:#444;letter-spacing:-0.15px;">Disbursements</div>
<svg class="i" style="left:63px;top:603px;" width="14" height="14"><use href="#globe-dark"/></svg>
<div class="t" style="left:83.4px;top:603.84px;font-size:12px;line-height:12px;color:#444;letter-spacing:-0.15px;">Debit/Credit Memos</div>
<svg class="i" style="left:63px;top:631px;" width="14" height="14"><use href="#globe-dark"/></svg>
<div class="t" style="left:83.4px;top:631.84px;font-size:12px;line-height:12px;color:#444;letter-spacing:-0.15px;">Deposits</div>
<svg class="i" style="left:63px;top:659px;" width="14" height="14"><use href="#globe-dark"/></svg>
<div class="t" style="left:83.4px;top:659.84px;font-size:12px;line-height:12px;color:#444;letter-spacing:-0.15px;">Receipts</div>
<svg class="i" style="left:63px;top:687px;" width="14" height="14"><use href="#globe-dark"/></svg>
<div class="t" style="left:83.4px;top:687.84px;font-size:12px;line-height:12px;color:#444;letter-spacing:-0.15px;">Unauthorized Credit</div>
<div class="r" style="left:3px;top:708px;width:278px;height:1px;background:#cdcdcd;"></div>
<div class="t" style="left:63px;top:721.40px;font-size:13px;line-height:13px;color:#444;letter-spacing:-0.1px;">Items</div>
<svg class="i" style="left:267px;top:723px;" width="5" height="9"><use href="#chev-right-s"/></svg>
<div class="r" style="left:3px;top:746px;width:278px;height:1px;background:#cdcdcd;"></div>
<svg class="i" style="left:18px;top:757px;" width="23" height="17"><use href="#powerbi"/></svg>
<div class="t" style="left:53.5px;top:759.10px;font-size:13px;line-height:13px;color:#444;letter-spacing:-0.2px;">PowerBI Reports</div>
<div class="r" style="left:303px;top:173px;width:1274px;height:40px;background:#fff;border:1px solid #cfcfcf;box-sizing:border-box;"></div>
<svg class="i" style="left:318px;top:185px;" width="20" height="16"><use href="#book"/></svg>
<div class="t" style="left:355.2px;top:185.64px;font-size:12px;line-height:12px;color:#444;letter-spacing:-0.6px;">A001270955</div>
<div class="r" style="left:303px;top:220px;width:1256px;height:35px;background:#f2f2f2;"></div>
<div class="r" style="left:303px;top:255px;width:1256px;height:775px;background:#fff;"></div>
<div class="r" style="left:303px;top:276px;width:1256px;height:754px;overflow:hidden;">
<svg class="i" style="left:13px;top:8px" width="20" height="16"><use href="#book"/></svg>
<div class="t" style="left:49px;top:9.94px;font-size:12px;line-height:12px;color:#444;letter-spacing:-0.75px">7731052</div>
<div class="t" style="left:156px;top:9.94px;font-size:12px;line-height:12px;color:#444;letter-spacing:-0.2px">No</div>
<div class="t" style="left:255px;top:9.94px;font-size:12px;line-height:12px;color:#444;letter-spacing:-0.2px">No</div>
<div class="t" style="left:379.3px;width:100px;text-align:right;top:9.94px;font-size:12px;line-height:12px;color:#444;letter-spacing:-0.5px">0.00</div>
<div class="t" style="left:510.29999999999995px;width:100px;text-align:right;top:9.94px;font-size:12px;line-height:12px;color:#444;letter-spacing:-0.5px">0.00</div>
<div class="t" style="left:621px;top:9.94px;font-size:12px;line-height:12px;color:#444;letter-spacing:-0.2px">Receipt</div>
<div class="t" style="left:782px;top:9.94px;font-size:12px;line-height:12px;color:#444;letter-spacing:-0.62px">A001174373</div>
<div class="t" style="left:960px;top:9.94px;font-size:12px;line-height:12px;color:#444;letter-spacing:-0.5px">999</div>
<div class="t" style="left:1071px;top:9.94px;font-size:12px;line-height:12px;color:#444;letter-spacing:-0.25px">10/22/2024 11:52:31 AM</div>
<div class="r" style="left:0;top:31px;width:1256px;height:32px;background:#eeeeee"></div>
<svg class="i" style="left:13px;top:39px" width="20" height="16"><use href="#book"/></svg>
<div class="t" style="left:49px;top:40.94px;font-size:12px;line-height:12px;color:#444;letter-spacing:-0.75px">7731051</div>
<div class="t" style="left:156px;top:40.94px;font-size:12px;line-height:12px;color:#444;letter-spacing:-0.2px">No</div>
<div class="t" style="left:255px;top:40.94px;font-size:12px;line-height:12px;color:#444;letter-spacing:-0.2px">No</div>
<div class="t" style="left:379.3px;width:100px;text-align:right;top:40.94px;font-size:12px;line-height:12px;color:#444;letter-spacing:-0.5px">0.00</div>
<div class="t" style="left:510.29999999999995px;width:100px;text-align:right;top:40.94px;font-size:12px;line-height:12px;color:#444;letter-spacing:-0.5px">0.00</div>
<div class="t" style="left:621px;top:40.94px;font-size:12px;line-height:12px;color:#444;letter-spacing:-0.2px">Receipt</div>
<div class="t" style="left:782px;top:40.94px;font-size:12px;line-height:12px;color:#444;letter-spacing:-0.62px">A001174372</div>
<div class="t" style="left:960px;top:40.94px;font-size:12px;line-height:12px;color:#444;letter-spacing:-0.5px">999</div>
<div class="t" style="left:1071px;top:40.94px;font-size:12px;line-height:12px;color:#444;letter-spacing:-0.25px">10/22/2024 11:50:07 AM</div>
<svg class="i" style="left:13px;top:70px" width="20" height="16"><use href="#book"/></svg>
<div class="t" style="left:49px;top:71.94px;font-size:12px;line-height:12px;color:#444;letter-spacing:-0.75px">7731050</div>
<div class="t" style="left:156px;top:71.94px;font-size:12px;line-height:12px;color:#444;letter-spacing:-0.2px">No</div>
<div class="t" style="left:255px;top:71.94px;font-size:12px;line-height:12px;color:#444;letter-spacing:-0.2px">No</div>
<div class="t" style="left:379.3px;width:100px;text-align:right;top:71.94px;font-size:12px;line-height:12px;color:#444;letter-spacing:-0.5px">0.00</div>
<div class="t" style="left:510.29999999999995px;width:100px;text-align:right;top:71.94px;font-size:12px;line-height:12px;color:#444;letter-spacing:-0.5px">26.15</div>
<div class="t" style="left:621px;top:71.94px;font-size:12px;line-height:12px;color:#444;letter-spacing:-0.2px">Receipt</div>
<div class="t" style="left:782px;top:71.94px;font-size:12px;line-height:12px;color:#444;letter-spacing:-0.62px">A001174371</div>
<div class="t" style="left:960px;top:71.94px;font-size:12px;line-height:12px;color:#444;letter-spacing:-0.5px">999</div>
<div class="t" style="left:1071px;top:71.94px;font-size:12px;line-height:12px;color:#444;letter-spacing:-0.25px">10/22/2024 11:31:26 AM</div>
<div class="r" style="left:0;top:93px;width:1256px;height:32px;background:#eeeeee"></div>
<svg class="i" style="left:13.8px;top:99px;--rowbg:#eeeeee" width="19" height="20"><use href="#doc-green"/></svg>
<div class="t" style="left:49px;top:102.94px;font-size:12px;line-height:12px;color:#444;letter-spacing:-0.75px">7731047</div>
<div class="t" style="left:156px;top:102.94px;font-size:12px;line-height:12px;color:#444;letter-spacing:-0.2px">Yes</div>
<div class="t" style="left:255px;top:102.94px;font-size:12px;line-height:12px;color:#444;letter-spacing:-0.2px">No</div>
<div class="t" style="left:379.3px;width:100px;text-align:right;top:102.94px;font-size:12px;line-height:12px;color:#444;letter-spacing:-0.5px">0.73</div>
<div class="t" style="left:510.29999999999995px;width:100px;text-align:right;top:102.94px;font-size:12px;line-height:12px;color:#444;letter-spacing:-0.5px">0.73</div>
<div class="t" style="left:621px;top:102.94px;font-size:12px;line-height:12px;color:#444;letter-spacing:-0.55px">Parts Sale</div>
<div class="t" style="left:782px;top:102.94px;font-size:12px;line-height:12px;color:#444;letter-spacing:-0.62px">CB001228630:01</div>
<div class="t" style="left:960px;top:102.94px;font-size:12px;line-height:12px;color:#444;letter-spacing:-0.5px">999</div>
<div class="t" style="left:1071px;top:102.94px;font-size:12px;line-height:12px;color:#444;letter-spacing:-0.25px">10/22/2024 1:16:10 PM</div>
<svg class="i" style="left:13.8px;top:130px;--rowbg:#ffffff" width="19" height="20"><use href="#doc-green"/></svg>
<div class="t" style="left:49px;top:133.94px;font-size:12px;line-height:12px;color:#444;letter-spacing:-0.75px">7731046</div>
<div class="t" style="left:156px;top:133.94px;font-size:12px;line-height:12px;color:#444;letter-spacing:-0.2px">Yes</div>
<div class="t" style="left:255px;top:133.94px;font-size:12px;line-height:12px;color:#444;letter-spacing:-0.2px">No</div>
<div class="t" style="left:379.3px;width:100px;text-align:right;top:133.94px;font-size:12px;line-height:12px;color:#444;letter-spacing:-0.5px">0.00</div>
<div class="t" style="left:510.29999999999995px;width:100px;text-align:right;top:133.94px;font-size:12px;line-height:12px;color:#444;letter-spacing:-0.5px">0.00</div>
<div class="t" style="left:621px;top:133.94px;font-size:12px;line-height:12px;color:#444;letter-spacing:-0.55px">Parts Sale</div>
<div class="t" style="left:782px;top:133.94px;font-size:12px;line-height:12px;color:#444;letter-spacing:-0.62px">C101021000:01</div>
<div class="t" style="left:960px;top:133.94px;font-size:12px;line-height:12px;color:#444;letter-spacing:-0.5px">999</div>
<div class="t" style="left:1071px;top:133.94px;font-size:12px;line-height:12px;color:#444;letter-spacing:-0.25px">10/17/2024 12:51:41 PM</div>
<div class="r" style="left:0;top:155px;width:1256px;height:32px;background:#eeeeee"></div>
<svg class="i" style="left:13.8px;top:161px;--rowbg:#eeeeee" width="19" height="20"><use href="#doc-green"/></svg>
<div class="t" style="left:49px;top:164.94px;font-size:12px;line-height:12px;color:#444;letter-spacing:-0.75px">7731045</div>
<div class="t" style="left:156px;top:164.94px;font-size:12px;line-height:12px;color:#444;letter-spacing:-0.2px">Yes</div>
<div class="t" style="left:255px;top:164.94px;font-size:12px;line-height:12px;color:#444;letter-spacing:-0.2px">No</div>
<div class="t" style="left:379.3px;width:100px;text-align:right;top:164.94px;font-size:12px;line-height:12px;color:#444;letter-spacing:-0.5px">0.00</div>
<div class="t" style="left:510.29999999999995px;width:100px;text-align:right;top:164.94px;font-size:12px;line-height:12px;color:#444;letter-spacing:-0.5px">0.00</div>
<div class="t" style="left:621px;top:164.94px;font-size:12px;line-height:12px;color:#444;letter-spacing:-0.55px">Parts Sale</div>
<div class="t" style="left:782px;top:164.94px;font-size:12px;line-height:12px;color:#444;letter-spacing:-0.62px">C101020999:02</div>
<div class="t" style="left:960px;top:164.94px;font-size:12px;line-height:12px;color:#444;letter-spacing:-0.5px">999</div>
<div class="t" style="left:1071px;top:164.94px;font-size:12px;line-height:12px;color:#444;letter-spacing:-0.25px">10/25/2024 9:39:13 AM</div>
<svg class="i" style="left:13.8px;top:192px;--rowbg:#ffffff" width="19" height="20"><use href="#doc-green"/></svg>
<div class="t" style="left:49px;top:195.94px;font-size:12px;line-height:12px;color:#444;letter-spacing:-0.75px">7731044</div>
<div class="t" style="left:156px;top:195.94px;font-size:12px;line-height:12px;color:#444;letter-spacing:-0.2px">Yes</div>
<div class="t" style="left:255px;top:195.94px;font-size:12px;line-height:12px;color:#444;letter-spacing:-0.2px">No</div>
<div class="t" style="left:379.3px;width:100px;text-align:right;top:195.94px;font-size:12px;line-height:12px;color:#444;letter-spacing:-0.5px">0.00</div>
<div class="t" style="left:510.29999999999995px;width:100px;text-align:right;top:195.94px;font-size:12px;line-height:12px;color:#444;letter-spacing:-0.5px">0.00</div>
<div class="t" style="left:621px;top:195.94px;font-size:12px;line-height:12px;color:#444;letter-spacing:-0.55px">Parts Sale</div>
<div class="t" style="left:782px;top:195.94px;font-size:12px;line-height:12px;color:#444;letter-spacing:-0.62px">C101020999:01</div>
<div class="t" style="left:960px;top:195.94px;font-size:12px;line-height:12px;color:#444;letter-spacing:-0.5px">999</div>
<div class="t" style="left:1071px;top:195.94px;font-size:12px;line-height:12px;color:#444;letter-spacing:-0.25px">10/17/2024 12:49:05 PM</div>
<div class="r" style="left:0;top:217px;width:1256px;height:32px;background:#eeeeee"></div>
<svg class="i" style="left:13px;top:225px" width="20" height="16"><use href="#book"/></svg>
<div class="t" style="left:49px;top:226.94px;font-size:12px;line-height:12px;color:#444;letter-spacing:-0.75px">7731043</div>
<div class="t" style="left:156px;top:226.94px;font-size:12px;line-height:12px;color:#444;letter-spacing:-0.2px">No</div>
<div class="t" style="left:255px;top:226.94px;font-size:12px;line-height:12px;color:#444;letter-spacing:-0.2px">No</div>
<div class="t" style="left:379.3px;width:100px;text-align:right;top:226.94px;font-size:12px;line-height:12px;color:#444;letter-spacing:-0.5px">0.00</div>
<div class="t" style="left:510.29999999999995px;width:100px;text-align:right;top:226.94px;font-size:12px;line-height:12px;color:#444;letter-spacing:-0.5px">0.00</div>
<div class="t" style="left:621px;top:226.94px;font-size:12px;line-height:12px;color:#444;letter-spacing:-0.55px">Parts Sale</div>
<div class="t" style="left:782px;top:226.94px;font-size:12px;line-height:12px;color:#444;letter-spacing:-0.62px">Q101011377</div>
<div class="t" style="left:960px;top:226.94px;font-size:12px;line-height:12px;color:#444;letter-spacing:-0.5px">999</div>
<div class="t" style="left:1071px;top:226.94px;font-size:12px;line-height:12px;color:#444;letter-spacing:-0.25px">10/17/2024 12:00:00 AM</div>
<svg class="i" style="left:13.8px;top:254px;--rowbg:#ffffff" width="19" height="20"><use href="#doc-green"/></svg>
<div class="t" style="left:49px;top:257.94px;font-size:12px;line-height:12px;color:#444;letter-spacing:-0.75px">7731042</div>
<div class="t" style="left:156px;top:257.94px;font-size:12px;line-height:12px;color:#444;letter-spacing:-0.2px">Yes</div>
<div class="t" style="left:255px;top:257.94px;font-size:12px;line-height:12px;color:#444;letter-spacing:-0.2px">No</div>
<div class="t" style="left:379.3px;width:100px;text-align:right;top:257.94px;font-size:12px;line-height:12px;color:#444;letter-spacing:-0.5px">0.00</div>
<div class="t" style="left:510.29999999999995px;width:100px;text-align:right;top:257.94px;font-size:12px;line-height:12px;color:#444;letter-spacing:-0.5px">0.00</div>
<div class="t" style="left:621px;top:257.94px;font-size:12px;line-height:12px;color:#444;letter-spacing:-0.55px">Parts Sale</div>
<div class="t" style="left:782px;top:257.94px;font-size:12px;line-height:12px;color:#444;letter-spacing:-0.62px">C101020998:01</div>
<div class="t" style="left:960px;top:257.94px;font-size:12px;line-height:12px;color:#444;letter-spacing:-0.5px">999</div>
<div class="t" style="left:1071px;top:257.94px;font-size:12px;line-height:12px;color:#444;letter-spacing:-0.25px">10/17/2024 12:31:07 PM</div>
<div class="r" style="left:0;top:279px;width:1256px;height:32px;background:#eeeeee"></div>
<svg class="i" style="left:13px;top:287px" width="20" height="16"><use href="#book"/></svg>
<div class="t" style="left:49px;top:288.94px;font-size:12px;line-height:12px;color:#444;letter-spacing:-0.75px">7731041</div>
<div class="t" style="left:156px;top:288.94px;font-size:12px;line-height:12px;color:#444;letter-spacing:-0.2px">No</div>
<div class="t" style="left:255px;top:288.94px;font-size:12px;line-height:12px;color:#444;letter-spacing:-0.2px">No</div>
<div class="t" style="left:379.3px;width:100px;text-align:right;top:288.94px;font-size:12px;line-height:12px;color:#444;letter-spacing:-0.5px">0.00</div>
<div class="t" style="left:510.29999999999995px;width:100px;text-align:right;top:288.94px;font-size:12px;line-height:12px;color:#444;letter-spacing:-0.5px">0.00</div>
<div class="t" style="left:621px;top:288.94px;font-size:12px;line-height:12px;color:#444;letter-spacing:-0.55px">Parts Sale</div>
<div class="t" style="left:782px;top:288.94px;font-size:12px;line-height:12px;color:#444;letter-spacing:-0.62px">C101020997</div>
<div class="t" style="left:960px;top:288.94px;font-size:12px;line-height:12px;color:#444;letter-spacing:-0.5px">999</div>
<div class="t" style="left:1071px;top:288.94px;font-size:12px;line-height:12px;color:#444;letter-spacing:-0.25px">10/17/2024 12:00:00 AM</div>
<svg class="i" style="left:13.8px;top:316px;--rowbg:#ffffff" width="19" height="20"><use href="#doc-green"/></svg>
<div class="t" style="left:49px;top:319.94px;font-size:12px;line-height:12px;color:#444;letter-spacing:-0.75px">7731040</div>
<div class="t" style="left:156px;top:319.94px;font-size:12px;line-height:12px;color:#444;letter-spacing:-0.2px">Yes</div>
<div class="t" style="left:255px;top:319.94px;font-size:12px;line-height:12px;color:#444;letter-spacing:-0.2px">No</div>
<div class="t" style="left:379.3px;width:100px;text-align:right;top:319.94px;font-size:12px;line-height:12px;color:#444;letter-spacing:-0.5px">0.00</div>
<div class="t" style="left:510.29999999999995px;width:100px;text-align:right;top:319.94px;font-size:12px;line-height:12px;color:#444;letter-spacing:-0.5px">0.00</div>
<div class="t" style="left:621px;top:319.94px;font-size:12px;line-height:12px;color:#444;letter-spacing:-0.55px">Parts Sale</div>
<div class="t" style="left:782px;top:319.94px;font-size:12px;line-height:12px;color:#444;letter-spacing:-0.62px">C101020997:01</div>
<div class="t" style="left:960px;top:319.94px;font-size:12px;line-height:12px;color:#444;letter-spacing:-0.5px">999</div>
<div class="t" style="left:1071px;top:319.94px;font-size:12px;line-height:12px;color:#444;letter-spacing:-0.25px">10/17/2024 9:54:49 AM</div>
<div class="r" style="left:0;top:341px;width:1256px;height:32px;background:#eeeeee"></div>
<svg class="i" style="left:13.8px;top:347px;--rowbg:#eeeeee" width="19" height="20"><use href="#doc-green"/></svg>
<div class="t" style="left:49px;top:350.94px;font-size:12px;line-height:12px;color:#444;letter-spacing:-0.75px">7731039</div>
<div class="t" style="left:156px;top:350.94px;font-size:12px;line-height:12px;color:#444;letter-spacing:-0.2px">Yes</div>
<div class="t" style="left:255px;top:350.94px;font-size:12px;line-height:12px;color:#444;letter-spacing:-0.2px">No</div>
<div class="t" style="left:379.3px;width:100px;text-align:right;top:350.94px;font-size:12px;line-height:12px;color:#444;letter-spacing:-0.5px">0.00</div>
<div class="t" style="left:510.29999999999995px;width:100px;text-align:right;top:350.94px;font-size:12px;line-height:12px;color:#444;letter-spacing:-0.5px">0.00</div>
<div class="t" style="left:621px;top:350.94px;font-size:12px;line-height:12px;color:#444;letter-spacing:-0.55px">Parts Sale</div>
<div class="t" style="left:782px;top:350.94px;font-size:12px;line-height:12px;color:#444;letter-spacing:-0.62px">C101020996:01</div>
<div class="t" style="left:960px;top:350.94px;font-size:12px;line-height:12px;color:#444;letter-spacing:-0.5px">999</div>
<div class="t" style="left:1071px;top:350.94px;font-size:12px;line-height:12px;color:#444;letter-spacing:-0.25px">10/17/2024 9:43:27 AM</div>
<svg class="i" style="left:13.8px;top:378px;--rowbg:#ffffff" width="19" height="20"><use href="#doc-red"/></svg>
<div class="t" style="left:49px;top:381.94px;font-size:12px;line-height:12px;color:#444;letter-spacing:-0.75px">7731038</div>
<div class="t" style="left:156px;top:381.94px;font-size:12px;line-height:12px;color:#444;letter-spacing:-0.2px">No</div>
<div class="t" style="left:255px;top:381.94px;font-size:12px;line-height:12px;color:#444;letter-spacing:-0.2px">Yes</div>
<div class="t" style="left:379.3px;width:100px;text-align:right;top:381.94px;font-size:12px;line-height:12px;color:#444;letter-spacing:-0.5px">0.95</div>
<div class="t" style="left:510.29999999999995px;width:100px;text-align:right;top:381.94px;font-size:12px;line-height:12px;color:#444;letter-spacing:-0.5px">0.95</div>
<div class="t" style="left:621px;top:381.94px;font-size:12px;line-height:12px;color:#444;letter-spacing:-0.55px">Parts Sale</div>
<div class="t" style="left:782px;top:381.94px;font-size:12px;line-height:12px;color:#444;letter-spacing:-0.62px">C101020995:01</div>
<div class="t" style="left:960px;top:381.94px;font-size:12px;line-height:12px;color:#444;letter-spacing:-0.5px">999</div>
<div class="t" style="left:1071px;top:381.94px;font-size:12px;line-height:12px;color:#444;letter-spacing:-0.25px">10/17/2024 9:41:58 AM</div>
<div class="r" style="left:0;top:403px;width:1256px;height:32px;background:#eeeeee"></div>
<svg class="i" style="left:13px;top:411px" width="20" height="16"><use href="#book"/></svg>
<div class="t" style="left:49px;top:412.94px;font-size:12px;line-height:12px;color:#444;letter-spacing:-0.75px">7731037</div>
<div class="t" style="left:156px;top:412.94px;font-size:12px;line-height:12px;color:#444;letter-spacing:-0.2px">No</div>
<div class="t" style="left:255px;top:412.94px;font-size:12px;line-height:12px;color:#444;letter-spacing:-0.2px">No</div>
<div class="t" style="left:379.3px;width:100px;text-align:right;top:412.94px;font-size:12px;line-height:12px;color:#444;letter-spacing:-0.5px">0.00</div>
<div class="t" style="left:510.29999999999995px;width:100px;text-align:right;top:412.94px;font-size:12px;line-height:12px;color:#444;letter-spacing:-0.5px">0.00</div>
<div class="t" style="left:621px;top:412.94px;font-size:12px;line-height:12px;color:#444;letter-spacing:-0.55px">Parts Sale</div>
<div class="t" style="left:782px;top:412.94px;font-size:12px;line-height:12px;color:#444;letter-spacing:-0.62px">Q101011376</div>
<div class="t" style="left:960px;top:412.94px;font-size:12px;line-height:12px;color:#444;letter-spacing:-0.5px">999</div>
<div class="t" style="left:1071px;top:412.94px;font-size:12px;line-height:12px;color:#444;letter-spacing:-0.25px">10/17/2024 12:00:00 AM</div>
<svg class="i" style="left:13.8px;top:440px;--rowbg:#ffffff" width="19" height="20"><use href="#doc-red"/></svg>
<div class="t" style="left:49px;top:443.94px;font-size:12px;line-height:12px;color:#444;letter-spacing:-0.75px">7731036</div>
<div class="t" style="left:156px;top:443.94px;font-size:12px;line-height:12px;color:#444;letter-spacing:-0.2px">No</div>
<div class="t" style="left:255px;top:443.94px;font-size:12px;line-height:12px;color:#444;letter-spacing:-0.2px">Yes</div>
<div class="t" style="left:379.3px;width:100px;text-align:right;top:443.94px;font-size:12px;line-height:12px;color:#444;letter-spacing:-0.5px">91.81</div>
<div class="t" style="left:510.29999999999995px;width:100px;text-align:right;top:443.94px;font-size:12px;line-height:12px;color:#444;letter-spacing:-0.5px">91.81</div>
<div class="t" style="left:621px;top:443.94px;font-size:12px;line-height:12px;color:#444;letter-spacing:-0.55px">Parts Sale</div>
<div class="t" style="left:782px;top:443.94px;font-size:12px;line-height:12px;color:#444;letter-spacing:-0.62px">C101020994:01</div>
<div class="t" style="left:960px;top:443.94px;font-size:12px;line-height:12px;color:#444;letter-spacing:-0.5px">999</div>
<div class="t" style="left:1071px;top:443.94px;font-size:12px;line-height:12px;color:#444;letter-spacing:-0.25px">10/17/2024 9:13:11 AM</div>
<div class="r" style="left:0;top:465px;width:1256px;height:32px;background:#eeeeee"></div>
<svg class="i" style="left:13.8px;top:471px;--rowbg:#eeeeee" width="19" height="20"><use href="#doc-red"/></svg>
<div class="t" style="left:49px;top:474.94px;font-size:12px;line-height:12px;color:#444;letter-spacing:-0.75px">7731035</div>
<div class="t" style="left:156px;top:474.94px;font-size:12px;line-height:12px;color:#444;letter-spacing:-0.2px">No</div>
<div class="t" style="left:255px;top:474.94px;font-size:12px;line-height:12px;color:#444;letter-spacing:-0.2px">Yes</div>
<div class="t" style="left:379.3px;width:100px;text-align:right;top:474.94px;font-size:12px;line-height:12px;color:#444;letter-spacing:-0.5px">91.81</div>
<div class="t" style="left:510.29999999999995px;width:100px;text-align:right;top:474.94px;font-size:12px;line-height:12px;color:#444;letter-spacing:-0.5px">91.81</div>
<div class="t" style="left:621px;top:474.94px;font-size:12px;line-height:12px;color:#444;letter-spacing:-0.55px">Parts Sale</div>
<div class="t" style="left:782px;top:474.94px;font-size:12px;line-height:12px;color:#444;letter-spacing:-0.62px">C101020993:01</div>
<div class="t" style="left:960px;top:474.94px;font-size:12px;line-height:12px;color:#444;letter-spacing:-0.5px">999</div>
<div class="t" style="left:1071px;top:474.94px;font-size:12px;line-height:12px;color:#444;letter-spacing:-0.25px">10/17/2024 9:09:11 AM</div>
<svg class="i" style="left:13.8px;top:502px;--rowbg:#ffffff" width="19" height="20"><use href="#doc-red"/></svg>
<div class="t" style="left:49px;top:505.94px;font-size:12px;line-height:12px;color:#444;letter-spacing:-0.75px">7731034</div>
<div class="t" style="left:156px;top:505.94px;font-size:12px;line-height:12px;color:#444;letter-spacing:-0.2px">No</div>
<div class="t" style="left:255px;top:505.94px;font-size:12px;line-height:12px;color:#444;letter-spacing:-0.2px">Yes</div>
<div class="t" style="left:379.3px;width:100px;text-align:right;top:505.94px;font-size:12px;line-height:12px;color:#444;letter-spacing:-0.5px">91.81</div>
<div class="t" style="left:510.29999999999995px;width:100px;text-align:right;top:505.94px;font-size:12px;line-height:12px;color:#444;letter-spacing:-0.5px">91.81</div>
<div class="t" style="left:621px;top:505.94px;font-size:12px;line-height:12px;color:#444;letter-spacing:-0.55px">Parts Sale</div>
<div class="t" style="left:782px;top:505.94px;font-size:12px;line-height:12px;color:#444;letter-spacing:-0.62px">C101020992:01</div>
<div class="t" style="left:960px;top:505.94px;font-size:12px;line-height:12px;color:#444;letter-spacing:-0.5px">999</div>
<div class="t" style="left:1071px;top:505.94px;font-size:12px;line-height:12px;color:#444;letter-spacing:-0.25px">10/17/2024 9:01:20 AM</div>
<div class="r" style="left:0;top:527px;width:1256px;height:32px;background:#eeeeee"></div>
<svg class="i" style="left:13px;top:535px" width="20" height="16"><use href="#book"/></svg>
<div class="t" style="left:49px;top:536.94px;font-size:12px;line-height:12px;color:#444;letter-spacing:-0.75px">7731033</div>
<div class="t" style="left:156px;top:536.94px;font-size:12px;line-height:12px;color:#444;letter-spacing:-0.2px">No</div>
<div class="t" style="left:255px;top:536.94px;font-size:12px;line-height:12px;color:#444;letter-spacing:-0.2px">No</div>
<div class="t" style="left:379.3px;width:100px;text-align:right;top:536.94px;font-size:12px;line-height:12px;color:#444;letter-spacing:-0.5px">0.00</div>
<div class="t" style="left:510.29999999999995px;width:100px;text-align:right;top:536.94px;font-size:12px;line-height:12px;color:#444;letter-spacing:-0.5px">0.00</div>
<div class="t" style="left:621px;top:536.94px;font-size:12px;line-height:12px;color:#444;letter-spacing:-0.55px">Parts Sale</div>
<div class="t" style="left:782px;top:536.94px;font-size:12px;line-height:12px;color:#444;letter-spacing:-0.62px">Q101011375</div>
<div class="t" style="left:960px;top:536.94px;font-size:12px;line-height:12px;color:#444;letter-spacing:-0.5px">999</div>
<div class="t" style="left:1071px;top:536.94px;font-size:12px;line-height:12px;color:#444;letter-spacing:-0.25px">10/17/2024 12:00:00 AM</div>
<svg class="i" style="left:13px;top:566px" width="20" height="16"><use href="#book"/></svg>
<div class="t" style="left:49px;top:567.94px;font-size:12px;line-height:12px;color:#444;letter-spacing:-0.75px">7731032</div>
<div class="t" style="left:156px;top:567.94px;font-size:12px;line-height:12px;color:#444;letter-spacing:-0.2px">No</div>
<div class="t" style="left:255px;top:567.94px;font-size:12px;line-height:12px;color:#444;letter-spacing:-0.2px">No</div>
<div class="t" style="left:379.3px;width:100px;text-align:right;top:567.94px;font-size:12px;line-height:12px;color:#444;letter-spacing:-0.5px">0.00</div>
<div class="t" style="left:510.29999999999995px;width:100px;text-align:right;top:567.94px;font-size:12px;line-height:12px;color:#444;letter-spacing:-0.5px">0.00</div>
<div class="t" style="left:621px;top:567.94px;font-size:12px;line-height:12px;color:#444;letter-spacing:-0.55px">Parts Sale</div>
<div class="t" style="left:782px;top:567.94px;font-size:12px;line-height:12px;color:#444;letter-spacing:-0.62px">C101020991</div>
<div class="t" style="left:960px;top:567.94px;font-size:12px;line-height:12px;color:#444;letter-spacing:-0.5px">999</div>
<div class="t" style="left:1071px;top:567.94px;font-size:12px;line-height:12px;color:#444;letter-spacing:-0.25px">10/11/2024 12:00:00 AM</div>
<div class="r" style="left:0;top:589px;width:1256px;height:32px;background:#eeeeee"></div>
<svg class="i" style="left:13px;top:597px" width="20" height="16"><use href="#book"/></svg>
<div class="t" style="left:49px;top:598.94px;font-size:12px;line-height:12px;color:#444;letter-spacing:-0.75px">7731031</div>
<div class="t" style="left:156px;top:598.94px;font-size:12px;line-height:12px;color:#444;letter-spacing:-0.2px">No</div>
<div class="t" style="left:255px;top:598.94px;font-size:12px;line-height:12px;color:#444;letter-spacing:-0.2px">No</div>
<div class="t" style="left:379.3px;width:100px;text-align:right;top:598.94px;font-size:12px;line-height:12px;color:#444;letter-spacing:-0.5px">0.00</div>
<div class="t" style="left:510.29999999999995px;width:100px;text-align:right;top:598.94px;font-size:12px;line-height:12px;color:#444;letter-spacing:-0.5px">0.00</div>
<div class="t" style="left:621px;top:598.94px;font-size:12px;line-height:12px;color:#444;letter-spacing:-0.55px">Parts Sale</div>
<div class="t" style="left:782px;top:598.94px;font-size:12px;line-height:12px;color:#444;letter-spacing:-0.62px">C101020990</div>
<div class="t" style="left:960px;top:598.94px;font-size:12px;line-height:12px;color:#444;letter-spacing:-0.5px">999</div>
<div class="t" style="left:1071px;top:598.94px;font-size:12px;line-height:12px;color:#444;letter-spacing:-0.25px">10/11/2024 12:00:00 AM</div>
<svg class="i" style="left:13px;top:628px" width="20" height="16"><use href="#book"/></svg>
<div class="t" style="left:49px;top:629.94px;font-size:12px;line-height:12px;color:#444;letter-spacing:-0.75px">7731030</div>
<div class="t" style="left:156px;top:629.94px;font-size:12px;line-height:12px;color:#444;letter-spacing:-0.2px">No</div>
<div class="t" style="left:255px;top:629.94px;font-size:12px;line-height:12px;color:#444;letter-spacing:-0.2px">No</div>
<div class="t" style="left:379.3px;width:100px;text-align:right;top:629.94px;font-size:12px;line-height:12px;color:#444;letter-spacing:-0.5px">0.00</div>
<div class="t" style="left:510.29999999999995px;width:100px;text-align:right;top:629.94px;font-size:12px;line-height:12px;color:#444;letter-spacing:-0.5px">0.00</div>
<div class="t" style="left:621px;top:629.94px;font-size:12px;line-height:12px;color:#444;letter-spacing:-0.55px">Parts Sale</div>
<div class="t" style="left:782px;top:629.94px;font-size:12px;line-height:12px;color:#444;letter-spacing:-0.62px">CB001228629</div>
<div class="t" style="left:960px;top:629.94px;font-size:12px;line-height:12px;color:#444;letter-spacing:-0.5px">999</div>
<div class="t" style="left:1071px;top:629.94px;font-size:12px;line-height:12px;color:#444;letter-spacing:-0.25px">10/17/2024 12:00:00 AM</div>
<div class="r" style="left:0;top:651px;width:1256px;height:32px;background:#eeeeee"></div>
<svg class="i" style="left:13.8px;top:657px;--rowbg:#eeeeee" width="19" height="20"><use href="#doc-green"/></svg>
<div class="t" style="left:49px;top:660.94px;font-size:12px;line-height:12px;color:#444;letter-spacing:-0.75px">7731029</div>
<div class="t" style="left:156px;top:660.94px;font-size:12px;line-height:12px;color:#444;letter-spacing:-0.2px">Yes</div>
<div class="t" style="left:255px;top:660.94px;font-size:12px;line-height:12px;color:#444;letter-spacing:-0.2px">No</div>
<div class="t" style="left:379.3px;width:100px;text-align:right;top:660.94px;font-size:12px;line-height:12px;color:#444;letter-spacing:-0.5px">0.00</div>
<div class="t" style="left:510.29999999999995px;width:100px;text-align:right;top:660.94px;font-size:12px;line-height:12px;color:#444;letter-spacing:-0.5px">0.00</div>
<div class="t" style="left:621px;top:660.94px;font-size:12px;line-height:12px;color:#444;letter-spacing:-0.55px">Parts Sale</div>
<div class="t" style="left:782px;top:660.94px;font-size:12px;line-height:12px;color:#444;letter-spacing:-0.62px">C101020991:02</div>
<div class="t" style="left:960px;top:660.94px;font-size:12px;line-height:12px;color:#444;letter-spacing:-0.5px">999</div>
<div class="t" style="left:1071px;top:660.94px;font-size:12px;line-height:12px;color:#444;letter-spacing:-0.25px">10/17/2024 8:26:14 AM</div>
<svg class="i" style="left:13.8px;top:688px;--rowbg:#ffffff" width="19" height="20"><use href="#doc-green"/></svg>
<div class="t" style="left:49px;top:691.94px;font-size:12px;line-height:12px;color:#444;letter-spacing:-0.75px">7731028</div>
<div class="t" style="left:156px;top:691.94px;font-size:12px;line-height:12px;color:#444;letter-spacing:-0.2px">Yes</div>
<div class="t" style="left:255px;top:691.94px;font-size:12px;line-height:12px;color:#444;letter-spacing:-0.2px">No</div>
<div class="t" style="left:379.3px;width:100px;text-align:right;top:691.94px;font-size:12px;line-height:12px;color:#444;letter-spacing:-0.5px">0.00</div>
<div class="t" style="left:510.29999999999995px;width:100px;text-align:right;top:691.94px;font-size:12px;line-height:12px;color:#444;letter-spacing:-0.5px">0.00</div>
<div class="t" style="left:621px;top:691.94px;font-size:12px;line-height:12px;color:#444;letter-spacing:-0.55px">Parts Sale</div>
<div class="t" style="left:782px;top:691.94px;font-size:12px;line-height:12px;color:#444;letter-spacing:-0.62px">C101020991:01</div>
<div class="t" style="left:960px;top:691.94px;font-size:12px;line-height:12px;color:#444;letter-spacing:-0.5px">999</div>
<div class="t" style="left:1071px;top:691.94px;font-size:12px;line-height:12px;color:#444;letter-spacing:-0.25px">10/11/2024 11:04:49 AM</div>
<div class="r" style="left:0;top:713px;width:1256px;height:32px;background:#eeeeee"></div>
<svg class="i" style="left:13.8px;top:719px;--rowbg:#eeeeee" width="19" height="20"><use href="#doc-green"/></svg>
<div class="t" style="left:49px;top:722.94px;font-size:12px;line-height:12px;color:#444;letter-spacing:-0.75px">7731026</div>
<div class="t" style="left:156px;top:722.94px;font-size:12px;line-height:12px;color:#444;letter-spacing:-0.2px">Yes</div>
<div class="t" style="left:255px;top:722.94px;font-size:12px;line-height:12px;color:#444;letter-spacing:-0.2px">No</div>
<div class="t" style="left:379.3px;width:100px;text-align:right;top:722.94px;font-size:12px;line-height:12px;color:#444;letter-spacing:-0.5px">0.00</div>
<div class="t" style="left:510.29999999999995px;width:100px;text-align:right;top:722.94px;font-size:12px;line-height:12px;color:#444;letter-spacing:-0.5px">0.00</div>
<div class="t" style="left:621px;top:722.94px;font-size:12px;line-height:12px;color:#444;letter-spacing:-0.55px">Parts Sale</div>
<div class="t" style="left:782px;top:722.94px;font-size:12px;line-height:12px;color:#444;letter-spacing:-0.62px">C101020990:02</div>
<div class="t" style="left:960px;top:722.94px;font-size:12px;line-height:12px;color:#444;letter-spacing:-0.5px">999</div>
<div class="t" style="left:1071px;top:722.94px;font-size:12px;line-height:12px;color:#444;letter-spacing:-0.25px">10/17/2024 8:25:39 AM</div>
<svg class="i" style="left:13.8px;top:750px;--rowbg:#ffffff" width="19" height="20"><use href="#doc-green"/></svg>
</div>
<div class="r" style="left:453px;top:220px;width:1px;height:810px;background:#d4d4d4;"></div>
<div class="r" style="left:552px;top:220px;width:1px;height:810px;background:#d4d4d4;"></div>
<div class="r" style="left:663px;top:220px;width:1px;height:810px;background:#d4d4d4;"></div>
<div class="r" style="left:787px;top:220px;width:1px;height:810px;background:#d4d4d4;"></div>
<div class="r" style="left:918px;top:220px;width:1px;height:810px;background:#d4d4d4;"></div>
<div class="r" style="left:1079px;top:220px;width:1px;height:810px;background:#d4d4d4;"></div>
<div class="r" style="left:1257px;top:220px;width:1px;height:810px;background:#d4d4d4;"></div>
<div class="r" style="left:1368px;top:220px;width:1px;height:810px;background:#d4d4d4;"></div>
<div class="r" style="left:303px;top:255px;width:1px;height:775px;background:#d4d4d4;"></div>
<div class="r" style="left:303px;top:275px;width:1256px;height:1px;background:#d4d4d4;"></div>
<div class="r" style="left:1558px;top:220px;width:1px;height:810px;background:#d4d4d4;"></div>
<div class="t" style="left:310px;top:231.84px;font-size:12px;line-height:12px;color:#444;letter-spacing:-0.1px;">JeId</div>
<div class="t" style="left:461px;top:231.84px;font-size:12px;line-height:12px;color:#444;letter-spacing:-0.1px;">Posted</div>
<div class="t" style="left:560px;top:231.84px;font-size:12px;line-height:12px;color:#444;letter-spacing:-0.1px;">Suspended</div>
<div class="t" style="left:671px;top:231.84px;font-size:12px;line-height:12px;color:#444;letter-spacing:-0.1px;">AmtDb</div>
<div class="t" style="left:795px;top:231.84px;font-size:12px;line-height:12px;color:#444;letter-spacing:-0.1px;">AmtCr</div>
<div class="t" style="left:926px;top:231.84px;font-size:12px;line-height:12px;color:#444;letter-spacing:-0.1px;">Origin</div>
<div class="t" style="left:1087px;top:231.84px;font-size:12px;line-height:12px;color:#444;letter-spacing:-0.1px;">Ref</div>
<div class="t" style="left:1265px;top:231.84px;font-size:12px;line-height:12px;color:#444;letter-spacing:-0.1px;">EmpId</div>
<div class="t" style="left:1376px;top:231.84px;font-size:12px;line-height:12px;color:#444;letter-spacing:-0.1px;">DateUpdate</div>
<svg class="i" style="left:440px;top:236px;" width="9" height="6"><use href="#sort-down"/></svg>
<div class="r" style="left:1560px;top:220px;width:17px;height:810px;background:#ececec;border:1px solid #cfcfcf;box-sizing:border-box;"></div>
<div class="r" style="left:1561px;top:221px;width:15px;height:15px;background:#fff;"></div>
<svg class="i" style="left:1564px;top:226px;" width="9" height="5"><use href="#sb-up"/></svg>
<div class="r" style="left:1561px;top:236px;width:15px;height:2px;background:#cfcfcf;"></div>
<div class="r" style="left:1561px;top:251px;width:15px;height:2px;background:#cfcfcf;"></div>
<div class="r" style="left:1561px;top:253px;width:15px;height:43px;background:#fff;"></div>
<div class="r" style="left:1561px;top:296px;width:15px;height:2px;background:#cfcfcf;"></div>
<div class="r" style="left:1561px;top:1012px;width:15px;height:2px;background:#cfcfcf;"></div>
<div class="r" style="left:1561px;top:1014px;width:15px;height:15px;background:#fff;"></div>
<svg class="i" style="left:1564px;top:1019px;" width="9" height="5"><use href="#sb-down"/></svg>
<div class="r" style="left:1614px;top:163px;width:6px;height:78px;background:#c8c8c8;"></div>
<svg class="i" style="left:1594px;top:167px;" width="16" height="10"><use href="#s-customers"/></svg>
<div class="t" style="left:1593px;top:182px;width:16px;height:58px;writing-mode:vertical-rl;font-size:12px;line-height:16px;color:#444;letter-spacing:0px">Customers</div>
<div class="r" style="left:1614px;top:247px;width:6px;height:64px;background:#c8c8c8;"></div>
<svg class="i" style="left:1594px;top:250.5px;" width="16" height="10"><use href="#s-vendors"/></svg>
<div class="t" style="left:1593px;top:263px;width:16px;height:46px;writing-mode:vertical-rl;font-size:12px;line-height:16px;color:#444;letter-spacing:0.35px">Vendors</div>
<div class="r" style="left:1614px;top:317px;width:6px;height:64px;background:#c8c8c8;"></div>
<svg class="i" style="left:1596px;top:317.5px;" width="12" height="15.5"><use href="#s-vehicles"/></svg>
<div class="t" style="left:1593px;top:335.5px;width:16px;height:44.5px;writing-mode:vertical-rl;font-size:12px;line-height:16px;color:#444;letter-spacing:0px">Vehicles</div>
<div class="r" style="left:1614px;top:387px;width:6px;height:47px;background:#c8c8c8;"></div>
<svg class="i" style="left:1595px;top:389px;" width="14" height="14"><use href="#s-parts"/></svg>
<div class="t" style="left:1593px;top:406px;width:16px;height:26.600000000000023px;writing-mode:vertical-rl;font-size:12px;line-height:16px;color:#444;letter-spacing:0px">Parts</div>
<div class="r" style="left:1614px;top:440px;width:6px;height:78px;background:#c8c8c8;"></div>
<svg class="i" style="left:1594px;top:441px;" width="16" height="15"><use href="#s-employees"/></svg>
<div class="t" style="left:1593px;top:459px;width:16px;height:59px;writing-mode:vertical-rl;font-size:12px;line-height:16px;color:#444;letter-spacing:0px">Employees</div>
<div class="r" style="left:1614px;top:524px;width:6px;height:72px;background:#c8c8c8;"></div>
<div class="t" style="left:1593px;top:527px;width:16px;height:67.5px;writing-mode:vertical-rl;font-size:12px;line-height:16px;color:#444;letter-spacing:0.2px">Tech Loader</div>
<div class="r" style="left:0px;top:1033px;width:1117px;height:47px;background:#303030;"></div>
<div class="r" style="left:1117px;top:1033px;width:503px;height:47px;background:#4a4a4a;"></div>
<svg class="i" style="left:8px;top:1040px;" width="112" height="30"><use href="#excede"/></svg>
<div class="t" style="left:1146.2px;top:1049.25px;font-size:14px;line-height:14px;color:#fff;font-weight:700;letter-spacing:0.35px;">Selected: 1 Item(s)</div>
<div class="t" style="left:1352px;top:1049.25px;font-size:14px;line-height:14px;color:#fff;font-weight:700;letter-spacing:0.55px;">Total: 500 Item(s)</div>
<svg class="i" style="left:1589px;top:1046px;" width="21" height="21"><use href="#alert"/></svg>
</body></html>
